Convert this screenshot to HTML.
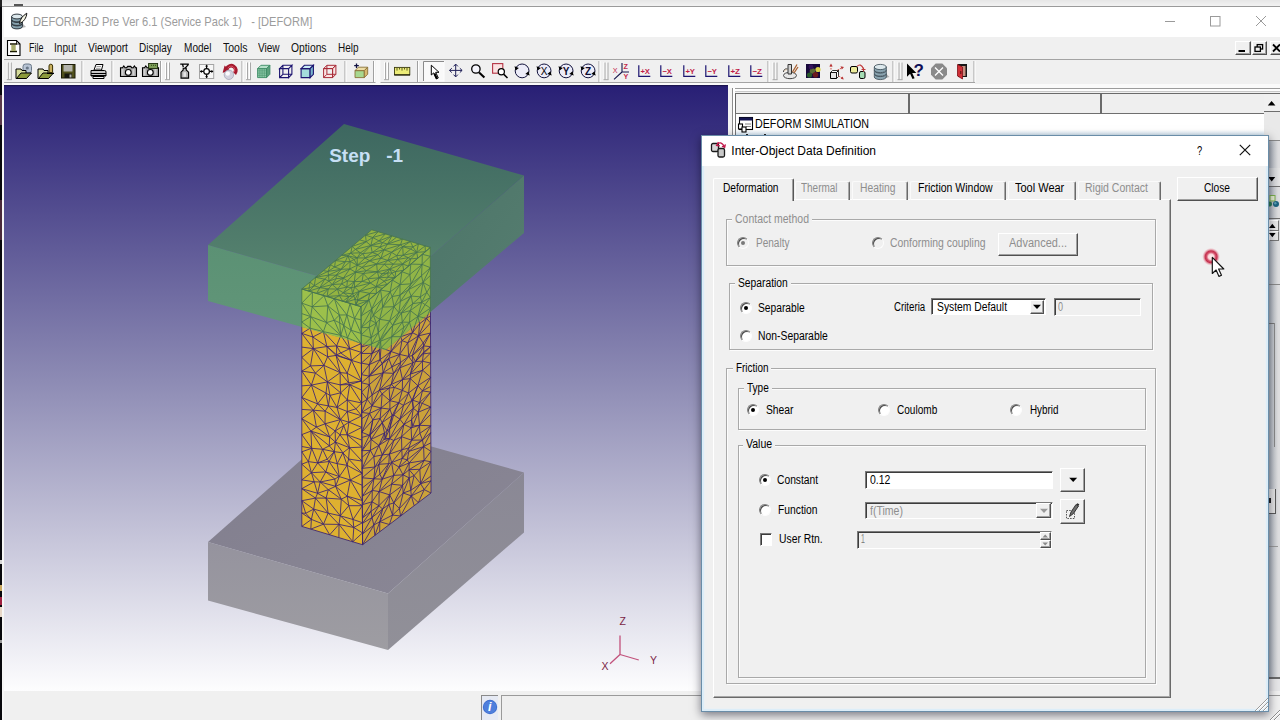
<!DOCTYPE html>
<html><head><meta charset="utf-8"><title>DEFORM-3D Pre</title>
<style>
html,body{margin:0;padding:0}
body{width:1280px;height:720px;overflow:hidden;position:relative;background:#f0f0f0;font-family:"Liberation Sans",sans-serif;}
.t{position:absolute;white-space:pre;transform-origin:0 0;display:block}
div,svg{box-sizing:border-box}
.abs{position:absolute}
.grp{position:absolute;border:1px solid #a9a9a9;box-shadow:1px 1px 0 #fcfcfc, inset 1px 1px 0 #fcfcfc}
.lbl{position:absolute;background:#f0f0f0}
.btn{position:absolute;background:#f0f0f0;border:1px solid;border-color:#fff #505050 #505050 #fff;box-shadow:inset -1px -1px 0 #a0a0a0}
.sunk{position:absolute;border:1px solid;border-color:#7a7a7a #fff #fff #7a7a7a;box-shadow:inset 1px 1px 0 #3c3c3c}
.radio{position:absolute;width:12px;height:12px;border-radius:50%;background:#fff;border:1px solid;border-color:#808080 #fcfcfc #fcfcfc #808080;box-shadow:inset 1px 1px 0 #4a4a4a}
.radio.dis{background:#f0f0f0}
.dot{position:absolute;width:4px;height:4px;border-radius:50%;background:#000}
</style></head><body>

<div style="position:absolute;left:0px;top:0px;width:1280px;height:7px;background:linear-gradient(#e6e6e6,#f4f4f4)"></div>
<div style="position:absolute;left:0px;top:6px;width:1280px;height:1px;background:#9a9a9a"></div>
<div style="position:absolute;left:14px;top:4px;width:9px;height:2px;background:#555"></div>
<div style="position:absolute;left:0px;top:7px;width:1280px;height:30px;background:#fff"></div>
<div style="position:absolute;left:0px;top:37px;width:1280px;height:23px;background:#f0f0f0"></div>
<div style="position:absolute;left:0px;top:59px;width:1280px;height:1px;background:#a3a3a3"></div>
<div style="position:absolute;left:0px;top:60px;width:1280px;height:22px;background:#f0f0f0"></div>
<div style="position:absolute;left:0px;top:82px;width:975px;height:1px;background:#a3a3a3"></div>
<div style="position:absolute;left:0px;top:83px;width:975px;height:2px;background:#fafafa"></div>
<div style="position:absolute;left:975px;top:84px;width:305px;height:4px;background:#fafafa"></div>
<span class="t" style="left:32.50px;top:13.60px;font-size:12.2px;line-height:16px;color:#9c9c9c;transform:scaleX(0.9102);">DEFORM-3D Pre Ver 6.1 (Service Pack 1)   - [DEFORM]</span>
<svg class="abs" style="left:1160px;top:10px" width="112" height="22" viewBox="1160 10 112 22" fill="none" stroke="#9a9a9a" stroke-width="1"><path d="M1165 21.5H1175"/><rect x="1210.5" y="16.5" width="9.5" height="9.5"/><path d="M1256 16L1266 26M1266 16L1256 26"/></svg>
<span class="t" style="left:28.60px;top:40.00px;font-size:12px;line-height:16px;color:#111;transform:scaleX(0.7453);">File</span>
<span class="t" style="left:54.40px;top:40.00px;font-size:12px;line-height:16px;color:#111;transform:scaleX(0.8427);">Input</span>
<span class="t" style="left:88.00px;top:40.00px;font-size:12px;line-height:16px;color:#111;transform:scaleX(0.8602);">Viewport</span>
<span class="t" style="left:139.20px;top:40.00px;font-size:12px;line-height:16px;color:#111;transform:scaleX(0.8333);">Display</span>
<span class="t" style="left:183.80px;top:40.00px;font-size:12px;line-height:16px;color:#111;transform:scaleX(0.8379);">Model</span>
<span class="t" style="left:222.50px;top:40.00px;font-size:12px;line-height:16px;color:#111;transform:scaleX(0.8744);">Tools</span>
<span class="t" style="left:258.00px;top:40.00px;font-size:12px;line-height:16px;color:#111;transform:scaleX(0.8372);">View</span>
<span class="t" style="left:290.50px;top:40.00px;font-size:12px;line-height:16px;color:#111;transform:scaleX(0.8587);">Options</span>
<span class="t" style="left:337.50px;top:40.00px;font-size:12px;line-height:16px;color:#111;transform:scaleX(0.8313);">Help</span>
<div class="btn" style="left:1235px;top:41px;width:16px;height:14px"></div>
<div class="btn" style="left:1251.5px;top:41px;width:15.5px;height:14px"></div>
<div class="btn" style="left:1269.5px;top:41px;width:16px;height:14px"></div>
<svg class="abs" style="left:1235px;top:41px" width="45" height="14" viewBox="1235 41 45 14"><rect x="1238.5" y="50" width="6.5" height="2" fill="#000"/><g fill="none" stroke="#000" stroke-width="1.3"><rect x="1257.2" y="44.6" width="5.4" height="4.4"/><rect x="1255" y="47" width="5.4" height="4.4" fill="#f0f0f0"/></g><path d="M1273 44.5L1280 51.5M1280 44.5L1273 51.5" stroke="#000" stroke-width="1.8"/></svg>
<div style="position:absolute;left:0px;top:7px;width:2.4px;height:713px;background:#08080c"></div>
<div style="position:absolute;left:0px;top:0px;width:2px;height:7px;background:#222"></div>
<div style="position:absolute;left:0px;top:95px;width:2px;height:30px;background:#5a3a4a"></div>
<div style="position:absolute;left:0px;top:200px;width:2px;height:40px;background:#4a2a3a"></div>
<div style="position:absolute;left:0px;top:560px;width:2px;height:4px;background:#d8d8d8"></div>
<div style="position:absolute;left:0px;top:585px;width:2px;height:6px;background:#caa860"></div>
<div style="position:absolute;left:0px;top:597px;width:2px;height:8px;background:#a02040"></div>
<div style="position:absolute;left:0px;top:607px;width:2px;height:10px;background:#e8d8c8"></div>
<div style="position:absolute;left:0px;top:640px;width:2px;height:3px;background:#999"></div>
<div style="position:absolute;left:2.4px;top:7px;width:1.6px;height:713px;background:#f6f6f6"></div>
<svg class="abs" style="left:0;top:60px" width="1280" height="24" viewBox="0 60 1280 24" shape-rendering="auto"><path d="M7.3 62V79.5M10.3 62V79.5" stroke="#fff"/><path d="M8.3 62.5V79.7M11.3 62.5V79.7M6.8 79.7H11.8" stroke="#a8a8a8"/><rect x="23" y="64" width="8.5" height="9" rx="2.5" fill="#b8c4d4" stroke="#6a7888" stroke-width="1"/><circle cx="27.3" cy="68" r="1.6" fill="#6a7888"/><path d="M16 69h5l1 1.5h4v8H16z" fill="#d6dc9c" stroke="#000" stroke-width="1"/><path d="M16.5 78.5l4.5-5.5h10.5l-5 5.5z" fill="#8c9a3c" stroke="#000" stroke-width="1"/><path d="M38 69h5l1 1.5h4v8H38z" fill="#d6dc9c" stroke="#000" stroke-width="1"/><path d="M38.5 78.5l4.5-5.5h10.5l-5 5.5z" fill="#8c9a3c" stroke="#000" stroke-width="1"/><path d="M49 72.5V66a1.8 1.8 0 0 1 3.6 0V72.5z" fill="#c9b060" stroke="#3a3000" stroke-width="1"/><path d="M47 73.5h7" stroke="#000"/><rect x="61.5" y="64.5" width="13.5" height="13.5" fill="#50501c" stroke="#1c1c08"/><rect x="63.5" y="65" width="9" height="6.5" fill="#b4b4ac"/><rect x="64.5" y="73.5" width="7.5" height="4.5" fill="#181810"/><rect x="69.5" y="74.5" width="2" height="3" fill="#b4b4ac"/><path d="M82 61V82" stroke="#a0a0a0"/><path d="M83 61V82" stroke="#fff"/><path d="M94 70L96 64.5h7l-1.5 5.5z" fill="#fff" stroke="#000"/><path d="M91 70.5h13.5a1.5 1.5 0 0 1 1.5 1.5v4H91z" fill="#c8c8c8" stroke="#000"/><path d="M91 73.5h15M91 75.5h15" stroke="#000"/><path d="M93 76.5h11v2H93z" fill="#eee" stroke="#000"/><path d="M96.5 66.5h4.5M96 68.3h4.5" stroke="#888" stroke-width=".8"/><path d="M112 61V82" stroke="#a0a0a0"/><path d="M113 61V82" stroke="#fff"/><path d="M120.5 67.7h2l1.3-1.8l1.3 1.8h1.6l1-1.3h3l1 1.3h1.4l1.3-1.8l1.3 1.8h.8v8.8H120.5z" fill="#a8a8a8" stroke="#000" stroke-width="1.1"/><rect x="121.5" y="69" width="2" height="6.5" fill="#d0d0d0"/><rect x="132.5" y="69" width="2" height="6.5" fill="#d0d0d0"/><circle cx="128.3" cy="72.4" r="2.9" fill="#fff" stroke="#000" stroke-width="1.1"/><path d="M142.5 67.7h2l1.3-1.8l1.3 1.8h1.6l1-1.3h3l1 1.3h1.4l1.3-1.8l1.3 1.8h.8v8.8H142.5z" fill="#a8a8a8" stroke="#000" stroke-width="1.1"/><rect x="143.5" y="69" width="2" height="6.5" fill="#d0d0d0"/><rect x="154.5" y="69" width="2" height="6.5" fill="#d0d0d0"/><circle cx="150.3" cy="72.4" r="2.9" fill="#fff" stroke="#000" stroke-width="1.1"/><rect x="148.6" y="63.5" width="9" height="5" fill="#7c9c58" stroke="#1c2c0c" stroke-width=".9"/><path d="M151 65.3h5.5" stroke="#2c4c14" stroke-width="1" stroke-dasharray="1 1"/><path d="M160.5 61V82" stroke="#a0a0a0"/><path d="M161.5 61V82" stroke="#fff"/><path d="M165.5 62V79.5M168.5 62V79.5" stroke="#fff"/><path d="M166.5 62.5V79.7M169.5 62.5V79.7M165 79.7H170" stroke="#a8a8a8"/><path d="M180.2 64.2h8.6M188.6 64.4L184.6 68.6M182.6 64.4l.7 2.8" stroke="#000" stroke-width="1.3" fill="none"/><path d="M183.2 68.2h3v1.8l2.4 2.2v5.9h-7.6v-5.9l2.2-2.2z" fill="#b4b4b4" stroke="#000" stroke-width="1.1"/><rect x="183.4" y="72.2" width="2.6" height="4.6" fill="#e6e6e6"/><rect x="199.5" y="64.5" width="14.2" height="14" fill="#f6f6f6" stroke="#a4a4a4"/><circle cx="206.6" cy="71.4" r="2.8" fill="#fff" stroke="#000" stroke-width="1.2"/><path d="M206.6 65.4v3.2M206.6 74.2v3.2M200.4 71.4h3.2M209.6 71.4h3.2" stroke="#000" stroke-width="1.2"/><path d="M205.1 66.6L206.6 64.6l1.5 2zM205.1 76.2L206.6 78.2l1.5-2zM201.8 69.9L199.8 71.4l2 1.5zM211.4 69.9l2 1.5l-2 1.5z" fill="#000"/><path d="M234.6 73.6A4.7 4.7 0 1 0 226.8 68.6" fill="none" stroke="#a41a2e" stroke-width="3.8"/><path d="M233.8 72.2A3.6 3.6 0 1 0 228 68" fill="none" stroke="#dc5064" stroke-width="1"/><path d="M222.6 72.8L224.6 65.4L230.2 71z" fill="#a41a2e"/><circle cx="228.9" cy="74.8" r="4.7" fill="#d2d2de" stroke="#9c9cb0" stroke-width=".7"/><circle cx="227.8" cy="73.6" r="2.2" fill="#fafafc"/><path d="M242 61V82" stroke="#a0a0a0"/><path d="M243 61V82" stroke="#fff"/><path d="M246.5 62V79.5M249.5 62V79.5" stroke="#fff"/><path d="M247.5 62.5V79.7M250.5 62.5V79.7M246 79.7H251" stroke="#a8a8a8"/><path d="M257.6 68.6h9v9h-9z" fill="#8ccaa8" stroke="#3c8a64" stroke-width=".9"/><path d="M257.6 68.6l3.3-3.3h9l-3.3 3.3z" fill="#b4e0c8" stroke="#3c8a64" stroke-width=".9"/><path d="M266.6 68.6l3.3-3.3v9l-3.3 3.3z" fill="#5ca07c" stroke="#3c8a64" stroke-width=".9"/><path d="M259.85 68.6v9M262.1 68.6v9M264.35 68.6v9M257.6 70.85h9M257.6 73.1h9M257.6 75.35h9" stroke="#4c946e" stroke-width=".6"/><path d="M279.6 68.6h9v9h-9zM279.6 68.6l3.3-3.3h9l-3.3 3.3zM288.6 68.6l3.3-3.3v9l-3.3 3.3zM282.90000000000003 65.3v9h9M282.90000000000003 74.3l-3.3 3.3" fill="none" stroke="#1c1470" stroke-width="1.1"/><path d="M301.1 68.6h9v9h-9z" fill="#a4dcdc" stroke="#1c1470" stroke-width="1.1"/><path d="M301.1 68.6l3.3-3.3h9l-3.3 3.3z" fill="#c8ecf4" stroke="#1c1470" stroke-width="1.1"/><path d="M310.1 68.6l3.3-3.3v9l-3.3 3.3z" fill="#78b4cc" stroke="#1c1470" stroke-width="1.1"/><path d="M323.6 68.6h9v9h-9zM323.6 68.6l3.3-3.3h9l-3.3 3.3zM332.6 68.6l3.3-3.3v9l-3.3 3.3zM326.90000000000003 65.3v9h9M326.90000000000003 74.3l-3.3 3.3" fill="#fbe4e4" stroke="#a82c38" stroke-width="1"/><path d="M345 61V82" stroke="#a0a0a0"/><path d="M346 61V82" stroke="#fff"/><path d="M354.2 65.7h4.6M356.5 63.4v4.6" stroke="#101040" stroke-width="1.3"/><path d="M355 70.6h9.3v7h-9.3z" fill="#a8d890" stroke="#8a7238" stroke-width=".9"/><path d="M355 70.6l3.4-3.4h9.3l-3.4 3.4z" fill="#ecdca4" stroke="#8a7238" stroke-width=".9"/><path d="M364.3 70.6l3.4-3.4v7l-3.4 3.4z" fill="#d8b870" stroke="#8a7238" stroke-width=".9"/><path d="M373.5 61V82" stroke="#a0a0a0"/><path d="M374.5 61V82" stroke="#fff"/><rect x="375.5" y="60" width="5" height="23" fill="#f8f8f8"/><path d="M384.5 62V79.5M387.5 62V79.5" stroke="#fff"/><path d="M385.5 62.5V79.7M388.5 62.5V79.7M384 79.7H389" stroke="#a8a8a8"/><rect x="394.5" y="67.4" width="15.3" height="7.4" fill="#ecec78" stroke="#3a3a10" stroke-width=".9"/><path d="M397 68v2.6M399.5 68v1.5M402 68v2.6M404.5 68v1.5M407 68v2.6" stroke="#3a3a10" stroke-width=".8"/><path d="M394.3 75h15.7" stroke="#1a1a00" stroke-width="1.1"/><path d="M417.5 61V82" stroke="#a0a0a0"/><path d="M418.5 61V82" stroke="#fff"/><rect x="423.5" y="61.5" width="20.5" height="19.5" fill="#f9f9f9" stroke="#fdfdfd"/><path d="M423.5 81V61.5H444" stroke="#8a8a8a" fill="none"/><polygon points="431.3,65.2 431.3,75 433.7,72.9 436.3,78.9 438.3,78 435.7,72.3 439,72.3" fill="#fff" stroke="#000" stroke-width="1" stroke-linejoin="miter"/><path d="M434.4 73.5l2.6 5.2" stroke="#000" stroke-width="2"/><path d="M455.7 64.3v12.4M449.5 70.4h12.6" stroke="#202058" stroke-width="1"/><path d="M453.5 66.4L455.7 64.1l2.2 2.3M453.5 74.6L455.7 76.9l2.2-2.3M451.8 68.2L449.5 70.4l2.3 2.2M459.8 68.2l2.3 2.2l-2.3 2.2" stroke="#202058" stroke-width="1" fill="none"/><circle cx="475.9" cy="69" r="4.2" fill="#f4f4fb" stroke="#000" stroke-width="1.3"/><path d="M479.1 72.4l5.3 5" stroke="#000" stroke-width="2.1"/><rect x="492.6" y="63.6" width="10.2" height="9.6" fill="#fbe2e2" stroke="#b43444" stroke-width="1.1"/><circle cx="501.3" cy="71.7" r="3.1" fill="#fff" stroke="#000" stroke-width="1.2"/><path d="M503.6 74.1l3.9 3.9" stroke="#000" stroke-width="1.5"/><circle cx="522.1" cy="70.9" r="6.9" fill="#ececf8" stroke="#12123c" stroke-width="1"/><path d="M514.5 66.30000000000001l1.2 4.2l3.2-2.6zM529.7 75.5l-1.2-4.2l-3.2 2.6z" fill="#000"/><circle cx="544.1" cy="70.9" r="6.9" fill="#ececf8" stroke="#12123c" stroke-width="1"/><path d="M536.5 66.30000000000001l1.2 4.2l3.2-2.6zM551.7 75.5l-1.2-4.2l-3.2 2.6z" fill="#000"/><text x="544.1" y="74.5" text-anchor="middle" font-family="Liberation Sans, sans-serif" font-size="10" fill="#000">X</text><circle cx="566.1" cy="70.9" r="6.9" fill="#ececf8" stroke="#12123c" stroke-width="1"/><path d="M558.5 66.30000000000001l1.2 4.2l3.2-2.6zM573.7 75.5l-1.2-4.2l-3.2 2.6z" fill="#000"/><text x="566.1" y="74.5" text-anchor="middle" font-family="Liberation Sans, sans-serif" font-size="10" font-weight="bold" fill="#0c0c30">Y</text><circle cx="588.1" cy="70.9" r="6.9" fill="#ececf8" stroke="#12123c" stroke-width="1"/><path d="M580.5 66.30000000000001l1.2 4.2l3.2-2.6zM595.7 75.5l-1.2-4.2l-3.2 2.6z" fill="#000"/><text x="588.1" y="74.5" text-anchor="middle" font-family="Liberation Sans, sans-serif" font-size="10" font-weight="bold" fill="#0c0c30">Z</text><path d="M599 61V82" stroke="#a0a0a0"/><path d="M600 61V82" stroke="#fff"/><path d="M604.0 62V79.5M607.0 62V79.5" stroke="#fff"/><path d="M605.0 62.5V79.7M608.0 62.5V79.7M603.5 79.7H608.5" stroke="#a8a8a8"/><path d="M622.0 63v9h7M622.0 72L614.0 79.3" stroke="#16164c" stroke-width="1.1" fill="none"/><g font-family="Liberation Sans, sans-serif" font-size="7.2" fill="#c4284c"><text x="623.5" y="68.8" font-weight="bold">Z</text><text x="623.5" y="79" font-weight="bold">Y</text><text x="612.8" y="73.4">X</text></g><path d="M638.8 65.3V76.4H650.3" stroke="#1c1470" stroke-width="1.2" fill="none"/><text x="640.4" y="73.6" font-family="Liberation Sans, sans-serif" font-size="7.6" font-weight="bold" fill="#c01c48" textLength="9.6" lengthAdjust="spacingAndGlyphs">+X</text><path d="M660.8 65.3V76.4H672.3" stroke="#1c1470" stroke-width="1.2" fill="none"/><text x="662.4" y="73.6" font-family="Liberation Sans, sans-serif" font-size="7.6" font-weight="bold" fill="#c01c48" textLength="9.6" lengthAdjust="spacingAndGlyphs">−X</text><path d="M683.8 65.3V76.4H695.3" stroke="#1c1470" stroke-width="1.2" fill="none"/><text x="685.4" y="73.6" font-family="Liberation Sans, sans-serif" font-size="7.6" font-weight="bold" fill="#c01c48" textLength="9.6" lengthAdjust="spacingAndGlyphs">+Y</text><path d="M705.8 65.3V76.4H717.3" stroke="#1c1470" stroke-width="1.2" fill="none"/><text x="707.4" y="73.6" font-family="Liberation Sans, sans-serif" font-size="7.6" font-weight="bold" fill="#c01c48" textLength="9.6" lengthAdjust="spacingAndGlyphs">−Y</text><path d="M728.8 65.3V76.4H740.3" stroke="#1c1470" stroke-width="1.2" fill="none"/><text x="730.4" y="73.6" font-family="Liberation Sans, sans-serif" font-size="7.6" font-weight="bold" fill="#c01c48" textLength="9.6" lengthAdjust="spacingAndGlyphs">+Z</text><path d="M750.8 65.3V76.4H762.3" stroke="#1c1470" stroke-width="1.2" fill="none"/><text x="752.4" y="73.6" font-family="Liberation Sans, sans-serif" font-size="7.6" font-weight="bold" fill="#c01c48" textLength="9.6" lengthAdjust="spacingAndGlyphs">−Z</text><path d="M768 61V82" stroke="#a0a0a0"/><path d="M769 61V82" stroke="#fff"/><path d="M773.0 62V79.5M776.0 62V79.5" stroke="#fff"/><path d="M774.0 62.5V79.7M777.0 62.5V79.7M772.5 79.7H777.5" stroke="#a8a8a8"/><ellipse cx="790" cy="75.5" rx="6.5" ry="3.2" fill="#e8e8e8" stroke="#444"/><path d="M788 74V64.5h3.5V74z" fill="#d0d0d0" stroke="#333"/><path d="M783.5 72c0-3 3-4 4.5-2.5" fill="#f4e0c8" stroke="#444"/><path d="M792.5 72L797 64.5M794 73L798 67" stroke="#a86030" stroke-width="1.3"/><rect x="806" y="64" width="14" height="14" fill="#18083c"/><circle cx="818" cy="69.5" r="2.6" fill="#d8d048"/><circle cx="812.5" cy="71" r="2.8" fill="#5a6a34"/><circle cx="809.5" cy="75" r="2.6" fill="#2a5c2c"/><circle cx="815.5" cy="74.8" r="2.8" fill="#6c1a1c"/><circle cx="811" cy="67" r="2.4" fill="#34125a"/><path d="M830.5 72.5h6v6h-6z" fill="#e8e8e8" stroke="#000"/><path d="M830.5 72.5l2-2h6l-2 2zM836.5 72.5l2-2v6l-2 2z" fill="#fff" stroke="#000" stroke-width=".8"/><path d="M831.0 69.5V64.5M837.5 70L843.0 67.5M838.5 76l4.5 2.5" stroke="#d05048" stroke-width="1" stroke-dasharray="1.5 1"/><path d="M829.3 66.5l1.7-3l1.7 3zM840.5 66.3l3.5 .6l-2.2 2.6zM840.7 78.8l3 .6l-1-3z" fill="#b83838"/><rect x="850.5" y="66.5" width="7" height="6.5" rx="1.5" fill="#ecec9c" stroke="#000"/><rect x="859.5" y="71.5" width="5.5" height="7" rx="1.5" fill="#a4dcb4" stroke="#000"/><path d="M857 66.5c2-2.5 5-2 6.5 2.5M861.5 69.5h4M863.5 67.5v4" stroke="#c03838" stroke-width="1.1" fill="none"/><path d="M883.5 78.5l6-1.5l-3-3z" fill="#b0b0b0"/><path d="M874.3 74v3a6 2.6 0 0 0 12 0v-3z" fill="#8aa4b0" stroke="#3a4a54" stroke-width=".8"/><ellipse cx="880.3" cy="74" rx="6" ry="2.6" fill="#dce8ec" stroke="#3a4a54" stroke-width=".8"/><path d="M874.3 70.5v3a6 2.6 0 0 0 12 0v-3z" fill="#8aa4b0" stroke="#3a4a54" stroke-width=".8"/><ellipse cx="880.3" cy="70.5" rx="6" ry="2.6" fill="#dce8ec" stroke="#3a4a54" stroke-width=".8"/><path d="M874.3 67v3a6 2.6 0 0 0 12 0v-3z" fill="#8aa4b0" stroke="#3a4a54" stroke-width=".8"/><ellipse cx="880.3" cy="67" rx="6" ry="2.6" fill="#dce8ec" stroke="#3a4a54" stroke-width=".8"/><path d="M893 61V82" stroke="#a0a0a0"/><path d="M894 61V82" stroke="#fff"/><path d="M898.0 62V79.5M901.0 62V79.5" stroke="#fff"/><path d="M899.0 62.5V79.7M902.0 62.5V79.7M897.5 79.7H902.5" stroke="#a8a8a8"/><polygon points="907.0,63.5 907.0,76.7 910.1,73.8 912.5,79.1 914.6,78.2 912.2,73.0 916.4,73.0" fill="#000" stroke="#000" stroke-width="0" stroke-linejoin="round"/><text x="913.6" y="75.6" font-family="Liberation Sans, sans-serif" font-size="17" font-weight="bold" fill="#101058">?</text><polygon points="935.7,63.5 942.3,63.5 947.0,68.2 947.0,74.8 942.3,79.5 935.7,79.5 931.0,74.8 931.0,68.2" fill="#8a8a8a"/><path d="M935 67.5l8 8M943 67.5l-8 8" stroke="#fff" stroke-width="1.3"/><rect x="958" y="64" width="9" height="13" fill="#181818"/><rect x="960" y="66" width="5.5" height="10" fill="#c89080"/><path d="M957.5 64.5l5 2.5v12l-5-3z" fill="#d03038" stroke="#801018" stroke-width=".8"/><path d="M960.8 71v3" stroke="#501010"/><path d="M974 61V82" stroke="#a0a0a0"/><path d="M975 61V82" stroke="#fff"/></svg>
<svg class="abs" style="left:4px;top:8px" width="30" height="50" viewBox="4 8 30 50"><path d="M19 28.5l7-1.5l-3-3z" fill="#b8b8b8"/><path d="M11.6 23.5v3a5.4 2.4 0 0 0 10.8 0v-3z" fill="#88a2ae" stroke="#202830" stroke-width=".9"/><ellipse cx="17" cy="23.5" rx="5.4" ry="2.4" fill="#dce8ec" stroke="#202830" stroke-width=".9"/><path d="M11.6 20v3a5.4 2.4 0 0 0 10.8 0v-3z" fill="#88a2ae" stroke="#202830" stroke-width=".9"/><ellipse cx="17" cy="20" rx="5.4" ry="2.4" fill="#dce8ec" stroke="#202830" stroke-width=".9"/><path d="M11.6 16.5v3a5.4 2.4 0 0 0 10.8 0v-3z" fill="#88a2ae" stroke="#202830" stroke-width=".9"/><ellipse cx="17" cy="16.5" rx="5.4" ry="2.4" fill="#dce8ec" stroke="#202830" stroke-width=".9"/><path d="M19.5 23.5C20 19 23 15.5 26.8 13.2C26.5 18 23.5 22 19.5 23.5z" fill="#f4f4e4" stroke="#101010" stroke-width="1"/><path d="M7.5 40.5h9l3.5 3.5v11.5h-12.5z" fill="#fff" stroke="#000" stroke-width="1.1"/><path d="M16.5 40.5v3.5h3.5" fill="none" stroke="#000" stroke-width=".8"/><path d="M10 44h7M10 51.5h7" stroke="#1a1a00" stroke-width="1.6"/><rect x="11.3" y="45" width="4.4" height="6" fill="#a8ac6c"/></svg>
<svg style="position:absolute;left:4px;top:85px" width="724" height="606" viewBox="4 85 724 606">
<defs><linearGradient id="bg" x1="0" y1="0" x2="0" y2="1"><stop offset="0" stop-color="#281f75"/><stop offset="0.487" stop-color="#8d8bb4"/><stop offset="1" stop-color="#fdfdfe"/></linearGradient>
<linearGradient id="gt" x1="0" y1="0" x2="0" y2="1"><stop offset="0" stop-color="#3d6760"/><stop offset="1" stop-color="#5a8771"/></linearGradient>
<linearGradient id="gl" x1="0" y1="0" x2="0" y2="1"><stop offset="0" stop-color="#5b9174"/><stop offset="1" stop-color="#63977a"/></linearGradient>
<linearGradient id="gr" x1="0" y1="0" x2="1" y2="1"><stop offset="0" stop-color="#4a7366"/><stop offset="1" stop-color="#587f72"/></linearGradient>
<linearGradient id="bt" x1="0" y1="0" x2="1" y2="1"><stop offset="0" stop-color="#807d8d"/><stop offset="1" stop-color="#8b8896"/></linearGradient>
<linearGradient id="bl" x1="0" y1="0" x2="0" y2="1"><stop offset="0" stop-color="#95939e"/><stop offset="1" stop-color="#9e9da2"/></linearGradient>
<linearGradient id="br" x1="0" y1="0" x2="0" y2="1"><stop offset="0" stop-color="#8a8895"/><stop offset="1" stop-color="#919098"/></linearGradient>
<clipPath id="ghex"><polygon points="344.0,124.0 524.0,175.5 524.0,233.0 385.5,350.0 208.0,301.0 208.0,245.0"/></clipPath>
</defs>
<rect x="4" y="85" width="724" height="606" fill="url(#bg)"/><rect x="4" y="85" width="724" height="1.2" fill="#1b1450"/>
<polygon points="344.0,422.0 524.0,472.5 388.0,593.5 208.0,542.0" fill="url(#bt)"/>
<polygon points="208.0,542.0 388.0,593.5 388.0,650.0 208.0,600.5" fill="url(#bl)"/>
<polygon points="388.0,593.5 524.0,472.5 524.0,532.5 388.0,650.0" fill="url(#br)"/>
<g stroke="#3a2272" stroke-width="0.85" fill="none">
<polygon points="301.8,289.0 361.0,306.7 362.6,544.7 301.8,526.4" fill="#deb130" stroke="none"/>
<polygon points="361.0,306.7 430.3,247.5 431.0,493.0 362.6,544.7" fill="#cba23a" stroke="none"/>
<path d="M301.8 289.0L312.4 292.2M301.8 289.0L301.8 303.1M312.4 292.2L324.1 295.7M312.4 292.2L301.8 303.1M312.4 292.2L312.2 306.8M324.1 295.7L334.4 298.7M324.1 295.7L312.2 306.8M324.1 295.7L327.8 305.8M334.4 298.7L350.1 303.4M334.4 298.7L327.8 305.8M334.4 298.7L339.4 315.0M334.4 298.7L346.9 314.9M350.1 303.4L361.0 306.7M350.1 303.4L346.9 314.9M350.1 303.4L354.5 318.5M361.0 306.7L361.1 319.7M361.0 306.7L354.5 318.5M301.8 303.1L312.2 306.8M301.8 303.1L301.8 313.6M301.8 303.1L310.6 316.6M312.2 306.8L327.8 305.8M312.2 306.8L310.6 316.6M312.2 306.8L326.6 322.6M327.8 305.8L339.4 315.0M327.8 305.8L326.6 322.6M327.8 305.8L334.2 320.3M339.4 315.0L346.9 314.9M339.4 315.0L339.7 322.8M339.4 315.0L343.8 325.6M339.4 315.0L334.2 320.3M346.9 314.9L351.0 330.2M346.9 314.9L343.8 325.6M346.9 314.9L354.5 318.5M361.1 319.7L361.2 333.5M361.1 319.7L354.5 318.5M301.8 313.6L310.6 316.6M301.8 313.6L301.8 322.0M310.6 316.6L326.6 322.6M310.6 316.6L301.8 322.0M310.6 316.6L310.1 328.2M310.6 316.6L323.4 331.6M326.6 322.6L323.4 331.6M326.6 322.6L340.8 335.4M326.6 322.6L334.2 320.3M339.7 322.8L340.8 335.4M339.7 322.8L343.8 325.6M339.7 322.8L334.2 320.3M351.0 330.2L361.2 333.5M351.0 330.2L347.5 337.9M351.0 330.2L361.2 343.6M351.0 330.2L343.8 325.6M351.0 330.2L354.5 318.5M361.2 333.5L361.2 343.6M361.2 333.5L354.5 318.5M301.8 322.0L310.1 328.2M301.8 322.0L301.8 333.4M310.1 328.2L323.4 331.6M310.1 328.2L301.8 333.4M310.1 328.2L312.8 337.0M323.4 331.6L340.8 335.4M323.4 331.6L312.8 337.0M323.4 331.6L326.9 346.5M323.4 331.6L336.6 345.9M340.8 335.4L347.5 337.9M340.8 335.4L336.6 345.9M340.8 335.4L349.7 348.7M340.8 335.4L343.8 325.6M340.8 335.4L334.2 320.3M347.5 337.9L361.2 343.6M347.5 337.9L349.7 348.7M347.5 337.9L343.8 325.6M361.2 343.6L349.7 348.7M361.2 343.6L361.3 352.4M301.8 333.4L312.8 337.0M301.8 333.4L301.8 347.1M301.8 333.4L313.4 348.6M312.8 337.0L326.9 346.5M312.8 337.0L313.4 348.6M326.9 346.5L336.6 345.9M326.9 346.5L313.4 348.6M326.9 346.5L327.6 356.7M326.9 346.5L336.0 355.4M326.9 346.5L336.6 354.8M336.6 345.9L349.7 348.7M336.6 345.9L340.7 353.0M336.6 345.9L336.6 354.8M349.7 348.7L361.3 352.4M349.7 348.7L351.5 360.4M349.7 348.7L340.7 353.0M361.3 352.4L351.5 360.4M361.3 352.4L361.4 363.4M301.8 347.1L313.4 348.6M301.8 347.1L301.8 357.4M313.4 348.6L327.6 356.7M313.4 348.6L301.8 357.4M313.4 348.6L310.5 365.9M313.4 348.6L323.9 365.4M327.6 356.7L336.0 355.4M327.6 356.7L323.9 365.4M327.6 356.7L340.2 372.6M336.0 355.4L351.5 360.4M336.0 355.4L340.2 372.6M336.0 355.4L347.2 373.3M336.0 355.4L336.6 354.8M351.5 360.4L361.4 363.4M351.5 360.4L347.2 373.3M351.5 360.4L361.5 381.0M351.5 360.4L340.7 353.0M351.5 360.4L336.6 354.8M361.4 363.4L361.5 381.0M301.8 357.4L310.5 365.9M301.8 357.4L301.8 371.1M310.5 365.9L323.9 365.4M310.5 365.9L301.8 371.1M310.5 365.9L315.4 373.1M323.9 365.4L340.2 372.6M323.9 365.4L315.4 373.1M323.9 365.4L327.4 381.9M340.2 372.6L347.2 373.3M340.2 372.6L327.4 381.9M340.2 372.6L340.2 384.9M340.2 372.6L348.6 382.8M347.2 373.3L361.5 381.0M347.2 373.3L348.6 382.8M361.5 381.0L348.6 382.8M361.5 381.0L361.6 390.1M361.5 381.0L349.7 384.5M301.8 371.1L315.4 373.1M301.8 371.1L301.8 385.9M301.8 371.1L311.4 385.1M315.4 373.1L327.4 381.9M315.4 373.1L311.4 385.1M327.4 381.9L340.2 384.9M327.4 381.9L311.4 385.1M327.4 381.9L326.0 393.1M327.4 381.9L340.7 392.8M327.4 381.9L330.0 395.4M340.2 384.9L348.6 382.8M340.2 384.9L340.7 392.8M340.2 384.9L349.7 384.5M348.6 382.8L349.7 384.5M361.6 390.1L361.6 403.0M361.6 390.1L349.7 384.5M301.8 385.9L311.4 385.1M301.8 385.9L301.8 397.5M311.4 385.1L326.0 393.1M311.4 385.1L301.8 397.5M311.4 385.1L317.6 403.9M326.0 393.1L317.6 403.9M326.0 393.1L328.4 405.9M326.0 393.1L330.0 395.4M340.7 392.8L347.3 399.9M340.7 392.8L337.0 407.4M340.7 392.8L349.7 384.5M340.7 392.8L330.0 395.4M347.3 399.9L361.6 403.0M347.3 399.9L337.0 407.4M347.3 399.9L347.3 411.5M347.3 399.9L356.0 408.8M347.3 399.9L349.7 384.5M361.6 403.0L361.7 415.8M361.6 403.0L356.0 408.8M361.6 403.0L349.7 384.5M301.8 397.5L317.6 403.9M301.8 397.5L301.8 409.4M301.8 397.5L313.4 410.2M317.6 403.9L328.4 405.9M317.6 403.9L313.4 410.2M317.6 403.9L325.2 411.2M328.4 405.9L337.0 407.4M328.4 405.9L325.2 411.2M328.4 405.9L340.4 419.6M328.4 405.9L330.0 395.4M337.0 407.4L347.3 411.5M337.0 407.4L340.4 419.6M337.0 407.4L330.0 395.4M347.3 411.5L361.7 415.8M347.3 411.5L340.4 419.6M347.3 411.5L348.9 422.2M347.3 411.5L356.0 408.8M361.7 415.8L348.9 422.2M361.7 415.8L361.8 427.4M361.7 415.8L356.0 408.8M301.8 409.4L313.4 410.2M301.8 409.4L301.8 418.7M313.4 410.2L325.2 411.2M313.4 410.2L301.8 418.7M313.4 410.2L316.4 427.1M313.4 410.2L325.0 423.8M325.2 411.2L340.4 419.6M325.2 411.2L325.0 423.8M340.4 419.6L348.9 422.2M340.4 419.6L325.0 423.8M340.4 419.6L343.7 425.6M340.4 419.6L335.2 431.0M348.9 422.2L361.8 427.4M348.9 422.2L347.2 434.8M348.9 422.2L343.7 425.6M361.8 427.4L347.2 434.8M361.8 427.4L361.9 440.1M301.8 418.7L316.4 427.1M301.8 418.7L301.8 434.6M301.8 418.7L310.9 431.1M316.4 427.1L325.0 423.8M316.4 427.1L310.9 431.1M316.4 427.1L329.6 436.9M325.0 423.8L329.6 436.9M325.0 423.8L335.2 431.0M339.9 434.7L347.2 434.8M339.9 434.7L335.4 442.1M339.9 434.7L349.5 447.7M339.9 434.7L343.7 425.6M339.9 434.7L335.2 431.0M347.2 434.8L361.9 440.1M347.2 434.8L349.5 447.7M347.2 434.8L361.9 447.1M347.2 434.8L343.7 425.6M361.9 440.1L361.9 447.1M301.8 434.6L310.9 431.1M301.8 434.6L301.8 446.5M301.8 434.6L311.7 448.3M310.9 431.1L329.6 436.9M310.9 431.1L311.7 448.3M310.9 431.1L322.6 449.3M310.9 431.1L329.3 445.8M329.6 436.9L335.4 442.1M329.6 436.9L335.2 431.0M329.6 436.9L329.3 445.8M335.4 442.1L349.5 447.7M335.4 442.1L334.3 451.7M335.4 442.1L342.9 452.8M335.4 442.1L335.2 431.0M335.4 442.1L329.3 445.8M349.5 447.7L361.9 447.1M349.5 447.7L348.6 459.0M349.5 447.7L362.0 461.1M349.5 447.7L342.9 452.8M361.9 447.1L362.0 461.1M301.8 446.5L311.7 448.3M301.8 446.5L301.8 451.8M311.7 448.3L322.6 449.3M311.7 448.3L301.8 451.8M311.7 448.3L317.7 462.9M311.7 448.3L308.4 461.6M322.6 449.3L334.3 451.7M322.6 449.3L317.7 462.9M322.6 449.3L327.3 459.2M322.6 449.3L329.3 445.8M334.3 451.7L329.1 461.5M334.3 451.7L337.2 463.7M334.3 451.7L342.9 452.8M334.3 451.7L327.3 459.2M334.3 451.7L329.3 445.8M348.6 459.0L362.0 461.1M348.6 459.0L347.1 465.3M348.6 459.0L362.1 473.3M348.6 459.0L342.9 452.8M362.0 461.1L362.1 473.3M301.8 451.8L301.8 464.2M301.8 451.8L308.4 461.6M317.7 462.9L329.1 461.5M317.7 462.9L311.4 472.7M317.7 462.9L325.8 471.9M317.7 462.9L327.3 459.2M317.7 462.9L308.4 461.6M329.1 461.5L337.2 463.7M329.1 461.5L325.8 471.9M329.1 461.5L339.3 476.6M329.1 461.5L327.3 459.2M337.2 463.7L347.1 465.3M337.2 463.7L339.3 476.6M337.2 463.7L342.9 452.8M347.1 465.3L362.1 473.3M347.1 465.3L339.3 476.6M347.1 465.3L350.3 480.0M347.1 465.3L342.9 452.8M362.1 473.3L350.3 480.0M362.1 473.3L362.2 485.3M301.8 464.2L311.4 472.7M301.8 464.2L301.8 479.9M301.8 464.2L308.4 461.6M311.4 472.7L325.8 471.9M311.4 472.7L301.8 479.9M311.4 472.7L314.2 481.8M311.4 472.7L320.2 482.0M311.4 472.7L308.4 461.6M325.8 471.9L339.3 476.6M325.8 471.9L320.2 482.0M325.8 471.9L334.8 479.0M339.3 476.6L350.3 480.0M339.3 476.6L335.6 486.3M339.3 476.6L334.8 479.0M350.3 480.0L362.2 485.3M350.3 480.0L335.6 486.3M350.3 480.0L347.2 496.2M350.3 480.0L362.3 500.5M362.2 485.3L362.3 500.5M301.8 479.9L314.2 481.8M301.8 479.9L301.8 488.7M314.2 481.8L301.8 488.7M314.2 481.8L317.6 493.3M314.2 481.8L320.2 482.0M328.3 489.7L335.6 486.3M328.3 489.7L317.6 493.3M328.3 489.7L326.1 498.1M328.3 489.7L341.3 499.2M328.3 489.7L320.2 482.0M335.6 486.3L347.2 496.2M335.6 486.3L341.3 499.2M335.6 486.3L320.2 482.0M335.6 486.3L334.8 479.0M347.2 496.2L362.3 500.5M347.2 496.2L341.3 499.2M347.2 496.2L348.8 505.7M347.2 496.2L362.3 505.7M362.3 500.5L362.3 505.7M301.8 488.7L317.6 493.3M301.8 488.7L301.8 500.7M301.8 488.7L315.5 498.1M317.6 493.3L326.1 498.1M317.6 493.3L320.2 482.0M317.6 493.3L315.5 498.1M326.1 498.1L341.3 499.2M326.1 498.1L328.1 513.1M326.1 498.1L340.2 515.8M326.1 498.1L315.5 498.1M341.3 499.2L348.8 505.7M341.3 499.2L340.2 515.8M348.8 505.7L362.3 505.7M348.8 505.7L340.2 515.8M348.8 505.7L353.0 519.5M362.3 505.7L353.0 519.5M362.3 505.7L362.5 522.7M301.8 500.7L313.7 509.1M301.8 500.7L301.8 513.0M301.8 500.7L305.7 513.3M301.8 500.7L315.5 498.1M313.7 509.1L328.1 513.1M313.7 509.1L311.4 519.4M313.7 509.1L323.5 524.2M313.7 509.1L305.7 513.3M313.7 509.1L315.5 498.1M328.1 513.1L340.2 515.8M328.1 513.1L323.5 524.2M328.1 513.1L339.0 524.4M328.1 513.1L315.5 498.1M340.2 515.8L353.0 519.5M340.2 515.8L339.0 524.4M340.2 515.8L353.8 527.5M353.0 519.5L362.5 522.7M353.0 519.5L353.8 527.5M362.5 522.7L353.8 527.5M362.5 522.7L362.5 532.9M301.8 513.0L311.4 519.4M301.8 513.0L301.8 526.4M301.8 513.0L305.7 513.3M311.4 519.4L323.5 524.2M311.4 519.4L301.8 526.4M311.4 519.4L310.8 529.1M311.4 519.4L305.7 513.3M323.5 524.2L339.0 524.4M323.5 524.2L310.8 529.1M323.5 524.2L329.7 534.8M339.0 524.4L353.8 527.5M339.0 524.4L329.7 534.8M339.0 524.4L338.9 537.6M339.0 524.4L352.8 541.8M353.8 527.5L362.5 532.9M353.8 527.5L352.8 541.8M362.5 532.9L352.8 541.8M362.5 532.9L362.6 544.7M301.8 526.4L310.8 529.1M310.8 529.1L329.7 534.8M329.7 534.8L338.9 537.6M338.9 537.6L352.8 541.8M352.8 541.8L362.6 544.7M320.2 482.0L334.8 479.0M340.7 353.0L336.6 354.8M343.7 425.6L335.2 431.0"/><path d="M361.0 306.7L369.0 299.9M361.0 306.7L361.1 316.0M369.0 299.9L380.5 290.0M369.0 299.9L361.1 316.0M369.0 299.9L371.7 309.1M380.5 290.0L392.3 280.0M380.5 290.0L371.7 309.1M380.5 290.0L382.0 299.3M380.5 290.0L390.2 291.8M392.3 280.0L401.9 271.7M392.3 280.0L390.2 291.8M392.3 280.0L400.0 284.6M401.9 271.7L410.8 264.1M401.9 271.7L400.0 284.6M401.9 271.7L409.8 274.6M410.8 264.1L422.3 254.3M410.8 264.1L409.8 274.6M410.8 264.1L422.1 264.4M422.3 254.3L430.3 247.5M422.3 254.3L422.1 264.4M422.3 254.3L430.3 256.3M430.3 247.5L430.3 256.3M361.1 316.0L371.7 309.1M361.1 316.0L361.1 327.7M371.7 309.1L382.0 299.3M371.7 309.1L361.1 327.7M371.7 309.1L370.3 320.1M371.7 309.1L373.3 315.1M382.0 299.3L390.2 291.8M382.0 299.3L382.7 307.1M382.0 299.3L373.3 315.1M390.2 291.8L400.0 284.6M390.2 291.8L382.7 307.1M390.2 291.8L392.1 296.6M400.0 284.6L409.8 274.6M400.0 284.6L392.1 296.6M400.0 284.6L400.0 295.1M400.0 284.6L411.1 283.8M409.8 274.6L422.1 264.4M409.8 274.6L411.1 283.8M422.1 264.4L430.3 256.3M422.1 264.4L411.1 283.8M422.1 264.4L421.5 275.7M422.1 264.4L430.4 267.7M430.3 256.3L430.4 267.7M361.1 327.7L370.3 320.1M361.1 327.7L361.2 334.8M361.1 327.7L369.1 327.4M370.3 320.1L369.1 327.4M370.3 320.1L373.3 315.1M370.3 320.1L376.3 323.1M382.7 307.1L392.1 296.6M382.7 307.1L379.6 319.3M382.7 307.1L394.0 306.7M382.7 307.1L373.3 315.1M392.1 296.6L400.0 295.1M392.1 296.6L394.0 306.7M400.0 295.1L411.1 283.8M400.0 295.1L394.0 306.7M400.0 295.1L400.4 301.4M400.0 295.1L408.6 289.6M411.1 283.8L421.5 275.7M411.1 283.8L408.6 289.6M421.5 275.7L430.4 267.7M421.5 275.7L423.0 282.4M421.5 275.7L408.6 289.6M430.4 267.7L423.0 282.4M430.4 267.7L430.4 275.5M361.2 334.8L369.1 327.4M361.2 334.8L361.3 347.1M361.2 334.8L371.1 337.7M369.1 327.4L371.1 337.7M369.1 327.4L376.3 323.1M379.6 319.3L394.0 306.7M379.6 319.3L378.3 332.7M379.6 319.3L389.7 320.9M379.6 319.3L373.3 315.1M379.6 319.3L376.3 323.1M394.0 306.7L400.4 301.4M394.0 306.7L389.7 320.9M394.0 306.7L398.9 312.7M400.4 301.4L411.1 296.0M400.4 301.4L398.9 312.7M400.4 301.4L408.6 289.6M411.1 296.0L423.0 282.4M411.1 296.0L398.9 312.7M411.1 296.0L412.7 303.7M411.1 296.0L420.4 296.9M411.1 296.0L401.4 313.0M411.1 296.0L408.6 289.6M423.0 282.4L430.4 275.5M423.0 282.4L420.4 296.9M423.0 282.4L430.4 286.5M423.0 282.4L426.8 292.4M423.0 282.4L408.6 289.6M430.4 275.5L430.4 286.5M361.3 347.1L371.1 337.7M361.3 347.1L361.3 353.5M361.3 347.1L371.5 344.0M371.1 337.7L378.3 332.7M371.1 337.7L371.5 344.0M371.1 337.7L376.3 323.1M378.3 332.7L389.7 320.9M378.3 332.7L371.5 344.0M378.3 332.7L379.9 340.1M378.3 332.7L376.3 323.1M389.7 320.9L398.9 312.7M389.7 320.9L379.9 340.1M389.7 320.9L392.6 325.4M398.9 312.7L392.6 325.4M398.9 312.7L401.4 313.0M412.7 303.7L420.4 296.9M412.7 303.7L410.3 310.6M412.7 303.7L421.7 302.3M412.7 303.7L401.4 313.0M420.4 296.9L421.7 302.3M420.4 296.9L426.8 292.4M430.4 286.5L430.4 297.5M430.4 286.5L426.8 292.4M361.3 353.5L371.5 344.0M361.3 353.5L361.4 363.1M361.3 353.5L372.1 353.4M371.5 344.0L379.9 340.1M371.5 344.0L372.1 353.4M379.9 340.1L392.6 325.4M379.9 340.1L372.1 353.4M379.9 340.1L380.6 341.2M392.6 325.4L402.3 322.1M392.6 325.4L391.8 336.7M392.6 325.4L401.4 313.0M392.6 325.4L380.6 341.2M402.3 322.1L410.3 310.6M402.3 322.1L391.8 336.7M402.3 322.1L403.8 327.3M402.3 322.1L409.5 322.3M402.3 322.1L401.4 313.0M410.3 310.6L421.7 302.3M410.3 310.6L409.5 322.3M410.3 310.6L417.9 316.4M410.3 310.6L401.4 313.0M421.7 302.3L430.4 297.5M421.7 302.3L417.9 316.4M421.7 302.3L426.8 292.4M421.7 302.3L425.1 304.6M430.4 297.5L430.5 308.1M430.4 297.5L426.8 292.4M430.4 297.5L425.1 304.6M361.4 363.1L372.1 353.4M361.4 363.1L361.5 374.6M361.4 363.1L369.4 364.6M372.1 353.4L369.4 364.6M372.1 353.4L379.2 350.1M372.1 353.4L380.6 341.2M381.0 347.7L391.8 336.7M381.0 347.7L380.1 359.6M381.0 347.7L391.0 351.5M381.0 347.7L379.2 350.1M381.0 347.7L380.6 341.2M391.8 336.7L403.8 327.3M391.8 336.7L391.0 351.5M391.8 336.7L400.8 336.7M391.8 336.7L380.6 341.2M403.8 327.3L409.5 322.3M403.8 327.3L400.8 336.7M409.5 322.3L417.9 316.4M409.5 322.3L412.5 332.7M409.5 322.3L400.8 336.7M417.9 316.4L430.5 308.1M417.9 316.4L412.5 332.7M417.9 316.4L419.6 323.7M417.9 316.4L426.5 318.4M417.9 316.4L425.1 304.6M430.5 308.1L430.5 315.8M430.5 308.1L426.5 318.4M430.5 308.1L425.1 304.6M361.5 374.6L369.4 364.6M361.5 374.6L361.5 382.8M361.5 374.6L369.1 376.2M369.4 364.6L380.1 359.6M369.4 364.6L369.1 376.2M369.4 364.6L379.2 350.1M380.1 359.6L391.0 351.5M380.1 359.6L369.1 376.2M380.1 359.6L382.1 363.7M380.1 359.6L379.2 350.1M391.0 351.5L401.9 340.6M391.0 351.5L382.1 363.7M391.0 351.5L388.8 358.4M391.0 351.5L399.6 354.4M391.0 351.5L400.8 336.7M401.9 340.6L412.5 332.7M401.9 340.6L399.6 354.4M401.9 340.6L407.8 342.8M401.9 340.6L400.8 336.7M412.5 332.7L419.6 323.7M412.5 332.7L407.8 342.8M412.5 332.7L418.6 335.8M412.5 332.7L400.8 336.7M419.6 323.7L418.6 335.8M419.6 323.7L426.5 318.4M430.5 315.8L430.5 323.0M430.5 315.8L426.5 318.4M361.5 382.8L369.1 376.2M361.5 382.8L361.6 392.1M361.5 382.8L369.3 384.6M369.1 376.2L382.1 363.7M369.1 376.2L369.3 384.6M369.1 376.2L383.1 372.8M369.1 376.2L382.2 363.8M382.1 363.7L388.8 358.4M382.1 363.7L382.2 363.8M388.8 358.4L399.6 354.4M388.8 358.4L383.1 372.8M388.8 358.4L391.9 367.0M388.8 358.4L382.2 363.8M399.6 354.4L407.8 342.8M399.6 354.4L391.9 367.0M399.6 354.4L400.5 362.5M399.6 354.4L408.7 356.4M407.8 342.8L418.6 335.8M407.8 342.8L408.7 356.4M418.6 335.8L430.5 323.0M418.6 335.8L408.7 356.4M418.6 335.8L423.2 343.0M418.6 335.8L430.5 333.0M418.6 335.8L426.5 318.4M418.6 335.8L412.3 355.6M430.5 323.0L430.5 333.0M430.5 323.0L426.5 318.4M361.6 392.1L369.3 384.6M361.6 392.1L361.6 402.9M361.6 392.1L367.2 399.3M369.3 384.6L383.1 372.8M369.3 384.6L372.1 395.0M369.3 384.6L367.2 399.3M383.1 372.8L391.9 367.0M383.1 372.8L372.1 395.0M383.1 372.8L379.5 390.1M383.1 372.8L393.6 373.4M383.1 372.8L382.2 363.8M391.9 367.0L400.5 362.5M391.9 367.0L393.6 373.4M400.5 362.5L408.7 356.4M400.5 362.5L393.6 373.4M400.5 362.5L399.9 367.8M408.7 356.4L399.9 367.8M408.7 356.4L413.0 362.6M408.7 356.4L412.3 355.6M423.2 343.0L430.5 333.0M423.2 343.0L423.7 345.9M423.2 343.0L412.3 355.6M430.5 333.0L430.6 346.7M430.5 333.0L423.7 345.9M361.6 402.9L361.7 412.5M361.6 402.9L367.2 399.3M372.1 395.0L379.5 390.1M372.1 395.0L372.0 405.8M372.1 395.0L367.2 399.3M379.5 390.1L393.6 373.4M379.5 390.1L372.0 405.8M379.5 390.1L382.1 393.9M379.5 390.1L391.3 384.4M379.5 390.1L389.1 388.1M393.6 373.4L399.9 367.8M393.6 373.4L391.3 384.4M399.9 367.8L413.0 362.6M399.9 367.8L391.3 384.4M399.9 367.8L402.5 379.5M413.0 362.6L402.5 379.5M413.0 362.6L410.4 374.1M413.0 362.6L415.5 361.5M413.0 362.6L412.3 355.6M423.8 351.9L430.6 346.7M423.8 351.9L415.5 361.5M423.8 351.9L423.7 345.9M423.8 351.9L423.4 353.9M430.6 346.7L430.6 352.9M430.6 346.7L423.7 345.9M430.6 346.7L423.4 353.9M361.7 412.5L372.0 405.8M361.7 412.5L361.8 418.7M361.7 412.5L369.6 413.4M361.7 412.5L367.2 399.3M372.0 405.8L382.1 393.9M372.0 405.8L369.6 413.4M372.0 405.8L381.1 408.0M372.0 405.8L367.2 399.3M382.1 393.9L381.1 408.0M382.1 393.9L389.9 400.7M382.1 393.9L389.1 388.1M391.3 384.4L402.5 379.5M391.3 384.4L394.4 387.4M391.3 384.4L389.1 388.1M402.5 379.5L410.4 374.1M402.5 379.5L402.3 390.4M402.5 379.5L410.3 378.6M402.5 379.5L394.4 387.4M410.4 374.1L422.4 361.2M410.4 374.1L410.3 378.6M410.4 374.1L422.6 370.2M410.4 374.1L415.5 361.5M422.4 361.2L430.6 352.9M422.4 361.2L422.6 370.2M422.4 361.2L430.6 363.1M422.4 361.2L415.5 361.5M422.4 361.2L423.4 353.9M430.6 352.9L430.6 363.1M430.6 352.9L423.4 353.9M361.8 418.7L369.6 413.4M361.8 418.7L361.8 432.3M369.6 413.4L381.1 408.0M369.6 413.4L361.8 432.3M369.6 413.4L372.8 419.9M381.1 408.0L389.9 400.7M381.1 408.0L372.8 419.9M381.1 408.0L380.1 418.5M381.1 408.0L389.9 409.2M389.9 400.7L402.3 390.4M389.9 400.7L389.9 409.2M389.9 400.7L398.8 402.7M389.9 400.7L394.4 387.4M389.9 400.7L389.1 388.1M402.3 390.4L410.3 378.6M402.3 390.4L398.8 402.7M402.3 390.4L408.6 393.0M402.3 390.4L394.4 387.4M410.3 378.6L422.6 370.2M410.3 378.6L408.6 393.0M410.3 378.6L417.9 385.7M422.6 370.2L430.6 363.1M422.6 370.2L417.9 385.7M422.6 370.2L430.7 377.3M430.6 363.1L430.7 377.3M361.8 432.3L372.8 419.9M361.8 432.3L361.9 437.4M361.8 432.3L369.5 435.3M372.8 419.9L380.1 418.5M372.8 419.9L370.3 434.9M372.8 419.9L369.5 435.3M380.1 418.5L389.9 409.2M380.1 418.5L370.3 434.9M380.1 418.5L382.2 422.6M389.9 409.2L398.8 402.7M389.9 409.2L382.2 422.6M389.9 409.2L392.2 415.5M398.8 402.7L408.6 393.0M398.8 402.7L392.2 415.5M398.8 402.7L403.5 405.4M398.8 402.7L393.7 414.9M408.6 393.0L417.9 385.7M408.6 393.0L403.5 405.4M408.6 393.0L412.0 400.4M417.9 385.7L430.7 377.3M417.9 385.7L412.7 400.2M417.9 385.7L422.4 390.9M417.9 385.7L412.0 400.4M430.7 377.3L422.4 390.9M430.7 377.3L430.7 386.4M361.9 437.4L362.0 450.7M361.9 437.4L369.5 435.3M370.3 434.9L382.2 422.6M370.3 434.9L371.1 439.4M370.3 434.9L369.5 435.3M382.2 422.6L392.2 415.5M382.2 422.6L371.1 439.4M382.2 422.6L384.5 432.9M382.2 422.6L387.0 430.9M392.2 415.5L389.6 429.0M392.2 415.5L393.7 414.9M392.2 415.5L387.0 430.9M403.5 405.4L399.9 419.2M403.5 405.4L393.7 414.9M403.5 405.4L412.0 400.4M412.7 400.2L422.4 390.9M412.7 400.2L413.3 408.3M412.7 400.2L419.6 402.5M412.7 400.2L412.0 400.4M422.4 390.9L430.7 386.4M422.4 390.9L419.6 402.5M422.4 390.9L430.7 392.1M430.7 386.4L430.7 392.1M362.0 450.7L371.1 439.4M362.0 450.7L362.0 457.3M362.0 450.7L370.4 450.4M362.0 450.7L369.5 435.3M371.1 439.4L384.5 432.9M371.1 439.4L370.4 450.4M371.1 439.4L378.9 445.4M371.1 439.4L369.5 435.3M384.5 432.9L378.9 445.4M384.5 432.9L385.4 438.3M384.5 432.9L383.8 439.5M384.5 432.9L387.0 430.9M389.6 429.0L399.9 419.2M389.6 429.0L389.7 438.6M389.6 429.0L393.7 414.9M389.6 429.0L385.4 438.3M389.6 429.0L387.0 430.9M399.9 419.2L413.3 408.3M399.9 419.2L389.7 438.6M399.9 419.2L403.9 424.4M399.9 419.2L393.7 414.9M399.9 419.2L412.0 400.4M413.3 408.3L419.6 402.5M413.3 408.3L403.9 424.4M413.3 408.3L411.6 419.8M413.3 408.3L418.3 412.2M413.3 408.3L412.0 400.4M419.6 402.5L430.7 392.1M419.6 402.5L418.3 412.2M419.6 402.5L422.2 403.3M430.7 392.1L430.8 407.0M430.7 392.1L422.2 403.3M362.0 457.3L370.4 450.4M362.0 457.3L362.1 468.4M370.4 450.4L378.9 445.4M370.4 450.4L362.1 468.4M370.4 450.4L373.8 456.6M378.9 445.4L389.7 438.6M378.9 445.4L373.8 456.6M378.9 445.4L382.3 454.9M378.9 445.4L383.8 439.5M389.7 438.6L403.9 424.4M389.7 438.6L382.3 454.9M389.7 438.6L393.8 440.5M389.7 438.6L385.4 438.3M389.7 438.6L383.8 439.5M403.9 424.4L411.6 419.8M403.9 424.4L393.8 440.5M403.9 424.4L401.5 436.7M403.9 424.4L411.1 427.9M411.6 419.8L418.3 412.2M411.6 419.8L412.8 426.0M411.6 419.8L411.1 427.9M418.3 412.2L430.8 407.0M418.3 412.2L412.8 426.0M418.3 412.2L419.5 425.3M418.3 412.2L422.2 403.3M430.8 407.0L419.5 425.3M430.8 407.0L430.8 414.2M430.8 407.0L422.2 403.3M362.1 468.4L373.8 456.6M362.1 468.4L362.2 477.8M362.1 468.4L374.9 467.0M373.8 456.6L382.3 454.9M373.8 456.6L374.9 467.0M382.3 454.9L393.8 440.5M382.3 454.9L374.9 467.0M382.3 454.9L378.9 464.3M382.3 454.9L389.4 454.1M393.8 440.5L401.5 436.7M393.8 440.5L389.4 454.1M401.5 436.7L389.4 454.1M401.5 436.7L401.8 449.8M401.5 436.7L411.7 440.2M401.5 436.7L411.1 427.9M412.8 426.0L419.5 425.3M412.8 426.0L411.1 427.9M419.5 425.3L430.8 414.2M419.5 425.3L411.7 440.2M419.5 425.3L419.9 433.3M419.5 425.3L430.8 425.8M419.5 425.3L411.1 427.9M430.8 414.2L430.8 425.8M362.2 477.8L374.9 467.0M362.2 477.8L362.2 488.1M362.2 477.8L373.9 478.8M374.9 467.0L378.9 464.3M374.9 467.0L373.9 478.8M378.9 464.3L389.4 454.1M378.9 464.3L373.9 478.8M378.9 464.3L379.9 474.3M378.9 464.3L388.8 463.6M389.4 454.1L401.8 449.8M389.4 454.1L391.6 462.6M389.4 454.1L388.8 463.6M401.8 449.8L411.7 440.2M401.8 449.8L391.6 462.6M401.8 449.8L402.2 458.4M401.8 449.8L408.7 448.0M411.7 440.2L419.9 433.3M411.7 440.2L422.5 440.0M411.7 440.2L411.1 427.9M411.7 440.2L408.7 448.0M419.9 433.3L430.8 425.8M419.9 433.3L422.5 440.0M430.8 425.8L422.5 440.0M430.8 425.8L430.8 432.6M362.2 488.1L373.9 478.8M362.2 488.1L362.3 496.3M373.9 478.8L379.9 474.3M373.9 478.8L362.3 496.3M373.9 478.8L372.3 490.4M373.9 478.8L382.2 479.2M379.9 474.3L382.2 479.2M379.9 474.3L388.8 463.6M391.6 462.6L402.2 458.4M391.6 462.6L382.2 479.2M391.6 462.6L393.7 475.4M391.6 462.6L399.0 467.1M391.6 462.6L388.8 463.6M402.2 458.4L408.9 451.4M402.2 458.4L399.0 467.1M402.2 458.4L407.2 459.9M402.2 458.4L408.7 448.0M408.9 451.4L422.5 440.0M408.9 451.4L423.6 446.6M408.9 451.4L407.2 459.9M408.9 451.4L408.7 448.0M422.5 440.0L430.8 432.6M422.5 440.0L423.6 446.6M422.5 440.0L408.7 448.0M430.8 432.6L423.6 446.6M430.8 432.6L430.9 442.8M362.3 496.3L372.3 490.4M362.3 496.3L362.3 504.7M372.3 490.4L382.2 479.2M372.3 490.4L362.3 504.7M372.3 490.4L372.0 501.8M372.3 490.4L379.2 491.6M382.2 479.2L393.7 475.4M382.2 479.2L379.2 491.6M382.2 479.2L388.8 463.6M393.7 475.4L399.0 467.1M393.7 475.4L379.2 491.6M393.7 475.4L391.6 484.2M393.7 475.4L403.0 474.8M399.0 467.1L409.2 462.9M399.0 467.1L403.0 474.8M399.0 467.1L407.2 459.9M409.2 462.9L423.6 446.6M409.2 462.9L403.0 474.8M409.2 462.9L409.1 469.7M409.2 462.9L424.1 460.5M409.2 462.9L407.2 459.9M423.6 446.6L430.9 442.8M423.6 446.6L424.1 460.5M423.6 446.6L430.9 451.3M423.6 446.6L407.2 459.9M430.9 442.8L430.9 451.3M362.3 504.7L372.0 501.8M362.3 504.7L362.4 518.0M372.0 501.8L379.2 491.6M372.0 501.8L362.4 518.0M372.0 501.8L371.0 511.3M372.0 501.8L378.9 505.7M379.2 491.6L391.6 484.2M379.2 491.6L378.9 505.7M379.2 491.6L389.7 494.9M391.6 484.2L403.0 474.8M391.6 484.2L389.7 494.9M391.6 484.2L402.6 485.4M403.0 474.8L409.1 469.7M403.0 474.8L402.6 485.4M403.0 474.8L409.2 477.9M409.1 469.7L424.1 460.5M409.1 469.7L409.2 477.9M409.1 469.7L419.8 469.3M409.1 469.7L414.1 475.5M424.1 460.5L430.9 451.3M424.1 460.5L419.8 469.3M424.1 460.5L430.9 461.8M430.9 451.3L430.9 461.8M362.4 518.0L371.0 511.3M362.4 518.0L362.5 523.4M371.0 511.3L378.9 505.7M371.0 511.3L362.5 523.4M371.0 511.3L372.0 517.5M378.9 505.7L389.7 494.9M378.9 505.7L372.0 517.5M378.9 505.7L382.6 509.0M389.7 494.9L402.6 485.4M389.7 494.9L382.6 509.0M389.7 494.9L388.9 504.4M389.7 494.9L393.8 502.9M402.6 485.4L409.2 477.9M402.6 485.4L403.2 493.0M402.6 485.4L393.8 502.9M409.2 477.9L403.2 493.0M409.2 477.9L410.8 490.3M409.2 477.9L414.1 475.5M419.8 469.3L430.9 461.8M419.8 469.3L420.6 483.7M419.8 469.3L414.1 475.5M430.9 461.8L420.6 483.7M430.9 461.8L431.0 476.0M362.5 523.4L372.0 517.5M362.5 523.4L362.5 534.0M372.0 517.5L382.6 509.0M372.0 517.5L362.5 534.0M372.0 517.5L373.8 525.1M382.6 509.0L388.9 504.4M382.6 509.0L373.8 525.1M382.6 509.0L379.8 521.7M388.9 504.4L379.8 521.7M388.9 504.4L392.5 515.1M388.9 504.4L393.8 502.9M403.2 493.0L410.8 490.3M403.2 493.0L399.4 508.5M403.2 493.0L411.3 495.9M403.2 493.0L393.8 502.9M410.8 490.3L420.6 483.7M410.8 490.3L411.3 495.9M410.8 490.3L414.1 475.5M420.6 483.7L431.0 476.0M420.6 483.7L411.3 495.9M420.6 483.7L424.2 489.6M420.6 483.7L431.0 480.8M420.6 483.7L414.1 475.5M431.0 476.0L431.0 480.8M362.5 534.0L373.8 525.1M362.5 534.0L362.6 544.7M373.8 525.1L379.8 521.7M373.8 525.1L362.6 544.7M373.8 525.1L374.9 535.4M379.8 521.7L392.5 515.1M379.8 521.7L374.9 535.4M379.8 521.7L379.7 531.8M379.8 521.7L389.4 524.5M392.5 515.1L399.4 508.5M392.5 515.1L389.4 524.5M392.5 515.1L400.6 516.0M392.5 515.1L393.8 502.9M399.4 508.5L411.3 495.9M399.4 508.5L400.6 516.0M399.4 508.5L393.8 502.9M411.3 495.9L424.2 489.6M411.3 495.9L400.6 516.0M411.3 495.9L414.2 505.7M411.3 495.9L418.3 502.6M424.2 489.6L431.0 480.8M424.2 489.6L418.3 502.6M424.2 489.6L431.0 493.0M431.0 480.8L431.0 493.0M362.6 544.7L374.9 535.4M374.9 535.4L379.7 531.8M379.7 531.8L389.4 524.5M389.4 524.5L400.6 516.0M400.6 516.0L414.2 505.7M414.2 505.7L418.3 502.6M418.3 502.6L431.0 493.0M415.5 361.5L423.7 345.9M415.5 361.5L423.4 353.9M415.5 361.5L412.3 355.6M423.7 345.9L412.3 355.6M394.4 387.4L389.1 388.1M373.3 315.1L376.3 323.1M379.2 350.1L380.6 341.2M385.4 438.3L383.8 439.5M385.4 438.3L387.0 430.9"/>
</g>
<polygon points="344.0,124.0 524.0,175.5 385.5,295.5 208.0,245.0" fill="url(#gt)"/>
<polygon points="208.0,245.0 385.5,295.5 385.5,350.0 208.0,301.0" fill="url(#gl)"/>
<polygon points="385.5,295.5 524.0,175.5 524.0,233.0 385.5,350.0" fill="url(#gr)"/>
<g clip-path="url(#ghex)" stroke="#467452" stroke-width="0.85" fill="none">
<polygon points="371.7,229.8 430.3,247.5 361.0,306.7 301.8,289.0" fill="#93b341" stroke="none"/>
<polygon points="301.8,289.0 361.0,306.7 362.6,544.7 301.8,526.4" fill="#9cc04b" stroke="none"/>
<polygon points="361.0,306.7 430.3,247.5 431.0,493.0 362.6,544.7" fill="#91b547" stroke="none"/>
<path d="M301.8 289.0L308.9 291.1M301.8 289.0L310.1 282.0M301.8 289.0L309.1 288.0M308.9 291.1L316.6 293.4M308.9 291.1L314.3 285.8M308.9 291.1L319.9 287.7M308.9 291.1L309.1 288.0M316.6 293.4L322.7 295.2M316.6 293.4L319.9 287.7M316.6 293.4L328.3 288.9M322.7 295.2L327.0 296.5M322.7 295.2L328.3 288.9M327.0 296.5L333.8 298.6M327.0 296.5L328.3 288.9M327.0 296.5L337.5 289.1M327.0 296.5L339.4 295.6M333.8 298.6L342.8 301.3M333.8 298.6L339.4 295.6M342.8 301.3L345.8 302.1M342.8 301.3L349.0 296.6M342.8 301.3L339.4 295.6M345.8 302.1L355.8 305.1M345.8 302.1L349.0 296.6M345.8 302.1L353.9 296.0M345.8 302.1L355.0 299.4M355.8 305.1L361.0 306.7M355.8 305.1L357.4 300.0M355.8 305.1L368.0 300.7M355.8 305.1L358.0 300.6M355.8 305.1L355.0 299.4M361.0 306.7L368.0 300.7M310.1 282.0L314.3 285.8M310.1 282.0L315.6 277.3M310.1 282.0L309.1 288.0M314.3 285.8L319.9 287.7M314.3 285.8L315.6 277.3M314.3 285.8L324.7 279.2M314.3 285.8L309.1 288.0M319.9 287.7L328.3 288.9M319.9 287.7L324.7 279.2M319.9 287.7L329.0 281.1M319.9 287.7L332.2 284.6M328.3 288.9L337.5 289.1M328.3 288.9L332.2 284.6M337.5 289.1L343.4 292.8M337.5 289.1L332.2 284.6M337.5 289.1L341.6 283.9M337.5 289.1L346.8 287.1M337.5 289.1L339.4 295.6M343.4 292.8L349.0 296.6M343.4 292.8L346.8 287.1M343.4 292.8L352.6 293.9M343.4 292.8L351.5 287.6M343.4 292.8L339.4 295.6M349.0 296.6L353.9 296.0M349.0 296.6L352.6 293.9M349.0 296.6L339.4 295.6M353.9 296.0L359.2 291.4M353.9 296.0L352.6 293.9M353.9 296.0L355.0 299.4M357.4 300.0L359.2 291.4M357.4 300.0L369.9 293.3M357.4 300.0L358.0 300.6M357.4 300.0L355.0 299.4M368.0 300.7L369.9 293.3M368.0 300.7L376.4 293.5M368.0 300.7L358.0 300.6M315.6 277.3L324.7 279.2M315.6 277.3L323.4 270.7M315.6 277.3L328.5 275.1M315.6 277.3L328.1 271.4M324.7 279.2L329.0 281.1M324.7 279.2L328.5 275.1M329.0 281.1L332.2 284.6M329.0 281.1L328.5 275.1M329.0 281.1L336.1 275.2M329.0 281.1L336.3 278.6M332.2 284.6L341.6 283.9M332.2 284.6L343.4 278.1M332.2 284.6L336.3 278.6M341.6 283.9L346.8 287.1M341.6 283.9L343.4 278.1M341.6 283.9L347.4 280.9M346.8 287.1L347.4 280.9M346.8 287.1L354.3 281.6M346.8 287.1L351.5 287.6M354.6 287.1L359.2 291.4M354.6 287.1L354.3 281.6M354.6 287.1L362.1 281.4M354.6 287.1L370.3 283.0M354.6 287.1L352.6 293.9M354.6 287.1L351.5 287.6M359.2 291.4L369.9 293.3M359.2 291.4L370.3 283.0M359.2 291.4L376.1 286.7M359.2 291.4L352.6 293.9M359.2 291.4L355.0 299.4M369.9 293.3L376.4 293.5M369.9 293.3L376.1 286.7M369.9 293.3L358.0 300.6M376.4 293.5L376.1 286.7M376.4 293.5L382.4 288.4M323.4 270.7L330.5 264.7M323.4 270.7L328.1 271.4M328.5 275.1L336.1 275.2M328.5 275.1L341.3 269.3M328.5 275.1L328.1 271.4M336.1 275.2L343.4 278.1M336.1 275.2L341.3 269.3M336.1 275.2L349.8 268.9M336.1 275.2L336.3 278.6M343.4 278.1L347.4 280.9M343.4 278.1L349.8 268.9M343.4 278.1L355.5 272.2M343.4 278.1L336.3 278.6M347.4 280.9L354.3 281.6M347.4 280.9L355.5 272.2M354.3 281.6L362.1 281.4M354.3 281.6L355.5 272.2M354.3 281.6L363.3 273.5M354.3 281.6L351.5 287.6M362.1 281.4L370.3 283.0M362.1 281.4L363.3 273.5M362.1 281.4L368.1 278.7M370.3 283.0L376.1 286.7M370.3 283.0L368.1 278.7M370.3 283.0L379.0 277.8M376.1 286.7L382.4 288.4M376.1 286.7L379.0 277.8M376.1 286.7L384.2 281.3M376.1 286.7L387.1 284.4M382.4 288.4L387.1 284.4M330.5 264.7L334.6 267.1M330.5 264.7L335.4 260.6M330.5 264.7L328.1 271.4M334.6 267.1L341.3 269.3M334.6 267.1L335.4 260.6M334.6 267.1L345.3 261.7M334.6 267.1L328.1 271.4M341.3 269.3L349.8 268.9M341.3 269.3L345.3 261.7M341.3 269.3L350.2 261.5M341.3 269.3L328.1 271.4M349.8 268.9L355.5 272.2M349.8 268.9L350.2 261.5M349.8 268.9L357.3 265.2M355.5 272.2L363.3 273.5M355.5 272.2L357.3 265.2M355.5 272.2L362.0 267.4M355.5 272.2L366.3 270.7M363.3 273.5L368.1 278.7M363.3 273.5L366.3 270.7M363.3 273.5L377.4 271.8M368.1 278.7L379.0 277.8M368.1 278.7L377.4 271.8M379.0 277.8L384.2 281.3M379.0 277.8L377.4 271.8M379.0 277.8L382.0 273.9M379.0 277.8L388.1 277.2M379.0 277.8L387.8 272.9M384.2 281.3L387.1 284.4M384.2 281.3L388.1 277.2M384.2 281.3L395.1 277.6M387.1 284.4L395.1 277.6M335.4 260.6L345.3 261.7M335.4 260.6L341.6 255.3M335.4 260.6L347.8 255.8M345.3 261.7L350.2 261.5M345.3 261.7L347.8 255.8M350.2 261.5L357.3 265.2M350.2 261.5L354.1 259.5M350.2 261.5L347.8 255.8M357.3 265.2L362.0 267.4M357.3 265.2L357.2 257.9M357.3 265.2L365.1 258.0M357.3 265.2L369.6 260.8M357.3 265.2L354.1 259.5M362.0 267.4L366.3 270.7M362.0 267.4L369.6 260.8M362.0 267.4L376.6 264.1M366.3 270.7L377.4 271.8M366.3 270.7L376.6 264.1M377.4 271.8L382.0 273.9M377.4 271.8L376.6 264.1M377.4 271.8L384.2 264.3M377.4 271.8L389.7 269.1M382.0 273.9L389.7 269.1M382.0 273.9L387.8 272.9M388.1 277.2L395.1 277.6M388.1 277.2L387.8 272.9M388.1 277.2L392.0 273.1M395.1 277.6L395.7 271.6M395.1 277.6L403.7 270.2M395.1 277.6L392.0 273.1M341.6 255.3L350.8 253.2M341.6 255.3L352.1 246.4M341.6 255.3L347.8 255.8M350.8 253.2L357.2 257.9M350.8 253.2L352.1 246.4M350.8 253.2L355.4 249.4M350.8 253.2L347.8 255.8M350.8 253.2L360.4 252.8M357.2 257.9L365.1 258.0M357.2 257.9L362.9 253.7M357.2 257.9L354.1 259.5M357.2 257.9L347.8 255.8M357.2 257.9L360.4 252.8M365.1 258.0L369.6 260.8M365.1 258.0L362.9 253.7M365.1 258.0L372.2 252.5M365.1 258.0L377.9 254.6M369.6 260.8L376.6 264.1M369.6 260.8L377.9 254.6M369.6 260.8L380.9 258.2M376.6 264.1L384.2 264.3M376.6 264.1L380.9 258.2M376.6 264.1L387.9 260.4M384.2 264.3L389.7 269.1M384.2 264.3L387.9 260.4M384.2 264.3L393.3 264.2M389.7 269.1L395.7 271.6M389.7 269.1L402.6 264.0M389.7 269.1L387.8 272.9M389.7 269.1L392.0 273.1M389.7 269.1L393.3 264.2M395.7 271.6L403.7 270.2M395.7 271.6L402.6 264.0M395.7 271.6L392.0 273.1M403.7 270.2L402.6 264.0M403.7 270.2L408.5 266.1M352.1 246.4L355.4 249.4M352.1 246.4L359.7 239.9M352.1 246.4L366.2 241.7M355.4 249.4L366.2 241.7M355.4 249.4L370.9 245.5M355.4 249.4L360.4 252.8M362.9 253.7L372.2 252.5M362.9 253.7L370.9 245.5M362.9 253.7L360.4 252.8M372.2 252.5L377.9 254.6M372.2 252.5L370.9 245.5M372.2 252.5L380.0 247.1M372.2 252.5L383.8 249.9M377.9 254.6L380.9 258.2M377.9 254.6L383.8 249.9M380.9 258.2L387.9 260.4M380.9 258.2L383.8 249.9M380.9 258.2L391.5 252.3M387.9 260.4L397.8 259.4M387.9 260.4L391.5 252.3M387.9 260.4L396.7 255.6M387.9 260.4L393.3 264.2M397.8 259.4L402.6 264.0M397.8 259.4L396.7 255.6M397.8 259.4L403.2 255.2M397.8 259.4L408.2 257.7M397.8 259.4L393.3 264.2M402.6 264.0L408.5 266.1M402.6 264.0L410.7 258.9M402.6 264.0L408.2 257.7M402.6 264.0L393.3 264.2M408.5 266.1L410.7 258.9M408.5 266.1L417.8 258.2M359.7 239.9L366.2 241.7M359.7 239.9L365.5 235.1M366.2 241.7L370.9 245.5M366.2 241.7L365.5 235.1M366.2 241.7L372.7 237.5M370.9 245.5L380.0 247.1M370.9 245.5L372.7 237.5M370.9 245.5L379.0 240.9M370.9 245.5L382.5 242.6M370.9 245.5L360.4 252.8M380.0 247.1L383.8 249.9M380.0 247.1L382.5 242.6M380.0 247.1L387.6 244.1M383.8 249.9L391.5 252.3M383.8 249.9L387.6 244.1M383.8 249.9L400.5 244.8M391.5 252.3L396.7 255.6M391.5 252.3L400.5 244.8M391.5 252.3L402.7 246.6M396.7 255.6L403.2 255.2M396.7 255.6L402.7 246.6M403.2 255.2L402.7 246.6M403.2 255.2L410.7 249.1M403.2 255.2L416.7 252.4M403.2 255.2L408.2 257.7M410.7 258.9L417.8 258.2M410.7 258.9L416.7 252.4M410.7 258.9L408.2 257.7M417.8 258.2L416.7 252.4M417.8 258.2L425.4 251.7M365.5 235.1L372.7 237.5M365.5 235.1L371.7 229.8M365.5 235.1L378.1 231.7M372.7 237.5L379.0 240.9M372.7 237.5L378.1 231.7M372.7 237.5L385.3 233.9M379.0 240.9L382.5 242.6M379.0 240.9L385.3 233.9M379.0 240.9L391.8 235.9M382.5 242.6L387.6 244.1M382.5 242.6L391.8 235.9M387.6 244.1L400.5 244.8M387.6 244.1L391.8 235.9M387.6 244.1L396.4 237.3M387.6 244.1L402.4 239.1M400.5 244.8L402.7 246.6M400.5 244.8L402.4 239.1M400.5 244.8L410.4 241.5M402.7 246.6L410.7 249.1M402.7 246.6L410.4 241.5M402.7 246.6L412.9 246.9M410.7 249.1L416.7 252.4M410.7 249.1L412.9 246.9M416.7 252.4L425.4 251.7M416.7 252.4L418.4 243.9M416.7 252.4L425.1 245.9M416.7 252.4L408.2 257.7M416.7 252.4L412.9 246.9M425.4 251.7L425.1 245.9M425.4 251.7L430.3 247.5M371.7 229.8L378.1 231.7M378.1 231.7L385.3 233.9M385.3 233.9L391.8 235.9M391.8 235.9L396.4 237.3M396.4 237.3L402.4 239.1M402.4 239.1L410.4 241.5M410.4 241.5L418.4 243.9M410.4 241.5L412.9 246.9M418.4 243.9L425.1 245.9M418.4 243.9L412.9 246.9M425.1 245.9L430.3 247.5M352.6 293.9L351.5 287.6M387.8 272.9L392.0 273.1M354.1 259.5L347.8 255.8"/><path d="M301.8 289.0L312.4 292.2M301.8 289.0L301.8 303.1M312.4 292.2L324.1 295.7M312.4 292.2L301.8 303.1M312.4 292.2L312.2 306.8M324.1 295.7L334.4 298.7M324.1 295.7L312.2 306.8M324.1 295.7L327.8 305.8M334.4 298.7L350.1 303.4M334.4 298.7L327.8 305.8M334.4 298.7L339.4 315.0M334.4 298.7L346.9 314.9M350.1 303.4L361.0 306.7M350.1 303.4L346.9 314.9M350.1 303.4L354.5 318.5M361.0 306.7L361.1 319.7M361.0 306.7L354.5 318.5M301.8 303.1L312.2 306.8M301.8 303.1L301.8 313.6M301.8 303.1L310.6 316.6M312.2 306.8L327.8 305.8M312.2 306.8L310.6 316.6M312.2 306.8L326.6 322.6M327.8 305.8L339.4 315.0M327.8 305.8L326.6 322.6M327.8 305.8L334.2 320.3M339.4 315.0L346.9 314.9M339.4 315.0L339.7 322.8M339.4 315.0L343.8 325.6M339.4 315.0L334.2 320.3M346.9 314.9L351.0 330.2M346.9 314.9L343.8 325.6M346.9 314.9L354.5 318.5M361.1 319.7L361.2 333.5M361.1 319.7L354.5 318.5M301.8 313.6L310.6 316.6M301.8 313.6L301.8 322.0M310.6 316.6L326.6 322.6M310.6 316.6L301.8 322.0M310.6 316.6L310.1 328.2M310.6 316.6L323.4 331.6M326.6 322.6L323.4 331.6M326.6 322.6L340.8 335.4M326.6 322.6L334.2 320.3M339.7 322.8L340.8 335.4M339.7 322.8L343.8 325.6M339.7 322.8L334.2 320.3M351.0 330.2L361.2 333.5M351.0 330.2L347.5 337.9M351.0 330.2L361.2 343.6M351.0 330.2L343.8 325.6M351.0 330.2L354.5 318.5M361.2 333.5L361.2 343.6M361.2 333.5L354.5 318.5M301.8 322.0L310.1 328.2M301.8 322.0L301.8 333.4M310.1 328.2L323.4 331.6M310.1 328.2L301.8 333.4M310.1 328.2L312.8 337.0M323.4 331.6L340.8 335.4M323.4 331.6L312.8 337.0M323.4 331.6L326.9 346.5M323.4 331.6L336.6 345.9M340.8 335.4L347.5 337.9M340.8 335.4L336.6 345.9M340.8 335.4L349.7 348.7M340.8 335.4L343.8 325.6M340.8 335.4L334.2 320.3M347.5 337.9L361.2 343.6M347.5 337.9L349.7 348.7M347.5 337.9L343.8 325.6M361.2 343.6L349.7 348.7M361.2 343.6L361.3 352.4M301.8 333.4L312.8 337.0M301.8 333.4L301.8 347.1M301.8 333.4L313.4 348.6M312.8 337.0L326.9 346.5M312.8 337.0L313.4 348.6M326.9 346.5L336.6 345.9M326.9 346.5L313.4 348.6M326.9 346.5L327.6 356.7M326.9 346.5L336.0 355.4M326.9 346.5L336.6 354.8M336.6 345.9L349.7 348.7M336.6 345.9L340.7 353.0M336.6 345.9L336.6 354.8M349.7 348.7L361.3 352.4M349.7 348.7L351.5 360.4M349.7 348.7L340.7 353.0M361.3 352.4L351.5 360.4M361.3 352.4L361.4 363.4M301.8 347.1L313.4 348.6M301.8 347.1L301.8 357.4M313.4 348.6L327.6 356.7M313.4 348.6L301.8 357.4M313.4 348.6L310.5 365.9M313.4 348.6L323.9 365.4M327.6 356.7L336.0 355.4M327.6 356.7L323.9 365.4M327.6 356.7L340.2 372.6M336.0 355.4L351.5 360.4M336.0 355.4L340.2 372.6M336.0 355.4L347.2 373.3M336.0 355.4L336.6 354.8M351.5 360.4L361.4 363.4M351.5 360.4L347.2 373.3M351.5 360.4L361.5 381.0M351.5 360.4L340.7 353.0M351.5 360.4L336.6 354.8M361.4 363.4L361.5 381.0M301.8 357.4L310.5 365.9M301.8 357.4L301.8 371.1M310.5 365.9L323.9 365.4M310.5 365.9L301.8 371.1M310.5 365.9L315.4 373.1M323.9 365.4L340.2 372.6M323.9 365.4L315.4 373.1M323.9 365.4L327.4 381.9M340.2 372.6L347.2 373.3M340.2 372.6L327.4 381.9M340.2 372.6L340.2 384.9M340.2 372.6L348.6 382.8M347.2 373.3L361.5 381.0M347.2 373.3L348.6 382.8M361.5 381.0L348.6 382.8M361.5 381.0L361.6 390.1M361.5 381.0L349.7 384.5M301.8 371.1L315.4 373.1M301.8 371.1L301.8 385.9M301.8 371.1L311.4 385.1M315.4 373.1L327.4 381.9M315.4 373.1L311.4 385.1M327.4 381.9L340.2 384.9M327.4 381.9L311.4 385.1M327.4 381.9L326.0 393.1M327.4 381.9L340.7 392.8M327.4 381.9L330.0 395.4M340.2 384.9L348.6 382.8M340.2 384.9L340.7 392.8M340.2 384.9L349.7 384.5M348.6 382.8L349.7 384.5M361.6 390.1L361.6 403.0M361.6 390.1L349.7 384.5M301.8 385.9L311.4 385.1M301.8 385.9L301.8 397.5M311.4 385.1L326.0 393.1M311.4 385.1L301.8 397.5M311.4 385.1L317.6 403.9M326.0 393.1L317.6 403.9M326.0 393.1L328.4 405.9M326.0 393.1L330.0 395.4M340.7 392.8L347.3 399.9M340.7 392.8L337.0 407.4M340.7 392.8L349.7 384.5M340.7 392.8L330.0 395.4M347.3 399.9L361.6 403.0M347.3 399.9L337.0 407.4M347.3 399.9L347.3 411.5M347.3 399.9L356.0 408.8M347.3 399.9L349.7 384.5M361.6 403.0L361.7 415.8M361.6 403.0L356.0 408.8M361.6 403.0L349.7 384.5M301.8 397.5L317.6 403.9M301.8 397.5L301.8 409.4M301.8 397.5L313.4 410.2M317.6 403.9L328.4 405.9M317.6 403.9L313.4 410.2M317.6 403.9L325.2 411.2M328.4 405.9L337.0 407.4M328.4 405.9L325.2 411.2M328.4 405.9L340.4 419.6M328.4 405.9L330.0 395.4M337.0 407.4L347.3 411.5M337.0 407.4L340.4 419.6M337.0 407.4L330.0 395.4M347.3 411.5L361.7 415.8M347.3 411.5L340.4 419.6M347.3 411.5L348.9 422.2M347.3 411.5L356.0 408.8M361.7 415.8L348.9 422.2M361.7 415.8L361.8 427.4M361.7 415.8L356.0 408.8M301.8 409.4L313.4 410.2M301.8 409.4L301.8 418.7M313.4 410.2L325.2 411.2M313.4 410.2L301.8 418.7M313.4 410.2L316.4 427.1M313.4 410.2L325.0 423.8M325.2 411.2L340.4 419.6M325.2 411.2L325.0 423.8M340.4 419.6L348.9 422.2M340.4 419.6L325.0 423.8M340.4 419.6L343.7 425.6M340.4 419.6L335.2 431.0M348.9 422.2L361.8 427.4M348.9 422.2L347.2 434.8M348.9 422.2L343.7 425.6M361.8 427.4L347.2 434.8M361.8 427.4L361.9 440.1M301.8 418.7L316.4 427.1M301.8 418.7L301.8 434.6M301.8 418.7L310.9 431.1M316.4 427.1L325.0 423.8M316.4 427.1L310.9 431.1M316.4 427.1L329.6 436.9M325.0 423.8L329.6 436.9M325.0 423.8L335.2 431.0M339.9 434.7L347.2 434.8M339.9 434.7L335.4 442.1M339.9 434.7L349.5 447.7M339.9 434.7L343.7 425.6M339.9 434.7L335.2 431.0M347.2 434.8L361.9 440.1M347.2 434.8L349.5 447.7M347.2 434.8L361.9 447.1M347.2 434.8L343.7 425.6M361.9 440.1L361.9 447.1M301.8 434.6L310.9 431.1M301.8 434.6L301.8 446.5M301.8 434.6L311.7 448.3M310.9 431.1L329.6 436.9M310.9 431.1L311.7 448.3M310.9 431.1L322.6 449.3M310.9 431.1L329.3 445.8M329.6 436.9L335.4 442.1M329.6 436.9L335.2 431.0M329.6 436.9L329.3 445.8M335.4 442.1L349.5 447.7M335.4 442.1L334.3 451.7M335.4 442.1L342.9 452.8M335.4 442.1L335.2 431.0M335.4 442.1L329.3 445.8M349.5 447.7L361.9 447.1M349.5 447.7L348.6 459.0M349.5 447.7L362.0 461.1M349.5 447.7L342.9 452.8M361.9 447.1L362.0 461.1M301.8 446.5L311.7 448.3M301.8 446.5L301.8 451.8M311.7 448.3L322.6 449.3M311.7 448.3L301.8 451.8M311.7 448.3L317.7 462.9M311.7 448.3L308.4 461.6M322.6 449.3L334.3 451.7M322.6 449.3L317.7 462.9M322.6 449.3L327.3 459.2M322.6 449.3L329.3 445.8M334.3 451.7L329.1 461.5M334.3 451.7L337.2 463.7M334.3 451.7L342.9 452.8M334.3 451.7L327.3 459.2M334.3 451.7L329.3 445.8M348.6 459.0L362.0 461.1M348.6 459.0L347.1 465.3M348.6 459.0L362.1 473.3M348.6 459.0L342.9 452.8M362.0 461.1L362.1 473.3M301.8 451.8L301.8 464.2M301.8 451.8L308.4 461.6M317.7 462.9L329.1 461.5M317.7 462.9L311.4 472.7M317.7 462.9L325.8 471.9M317.7 462.9L327.3 459.2M317.7 462.9L308.4 461.6M329.1 461.5L337.2 463.7M329.1 461.5L325.8 471.9M329.1 461.5L339.3 476.6M329.1 461.5L327.3 459.2M337.2 463.7L347.1 465.3M337.2 463.7L339.3 476.6M337.2 463.7L342.9 452.8M347.1 465.3L362.1 473.3M347.1 465.3L339.3 476.6M347.1 465.3L350.3 480.0M347.1 465.3L342.9 452.8M362.1 473.3L350.3 480.0M362.1 473.3L362.2 485.3M301.8 464.2L311.4 472.7M301.8 464.2L301.8 479.9M301.8 464.2L308.4 461.6M311.4 472.7L325.8 471.9M311.4 472.7L301.8 479.9M311.4 472.7L314.2 481.8M311.4 472.7L320.2 482.0M311.4 472.7L308.4 461.6M325.8 471.9L339.3 476.6M325.8 471.9L320.2 482.0M325.8 471.9L334.8 479.0M339.3 476.6L350.3 480.0M339.3 476.6L335.6 486.3M339.3 476.6L334.8 479.0M350.3 480.0L362.2 485.3M350.3 480.0L335.6 486.3M350.3 480.0L347.2 496.2M350.3 480.0L362.3 500.5M362.2 485.3L362.3 500.5M301.8 479.9L314.2 481.8M301.8 479.9L301.8 488.7M314.2 481.8L301.8 488.7M314.2 481.8L317.6 493.3M314.2 481.8L320.2 482.0M328.3 489.7L335.6 486.3M328.3 489.7L317.6 493.3M328.3 489.7L326.1 498.1M328.3 489.7L341.3 499.2M328.3 489.7L320.2 482.0M335.6 486.3L347.2 496.2M335.6 486.3L341.3 499.2M335.6 486.3L320.2 482.0M335.6 486.3L334.8 479.0M347.2 496.2L362.3 500.5M347.2 496.2L341.3 499.2M347.2 496.2L348.8 505.7M347.2 496.2L362.3 505.7M362.3 500.5L362.3 505.7M301.8 488.7L317.6 493.3M301.8 488.7L301.8 500.7M301.8 488.7L315.5 498.1M317.6 493.3L326.1 498.1M317.6 493.3L320.2 482.0M317.6 493.3L315.5 498.1M326.1 498.1L341.3 499.2M326.1 498.1L328.1 513.1M326.1 498.1L340.2 515.8M326.1 498.1L315.5 498.1M341.3 499.2L348.8 505.7M341.3 499.2L340.2 515.8M348.8 505.7L362.3 505.7M348.8 505.7L340.2 515.8M348.8 505.7L353.0 519.5M362.3 505.7L353.0 519.5M362.3 505.7L362.5 522.7M301.8 500.7L313.7 509.1M301.8 500.7L301.8 513.0M301.8 500.7L305.7 513.3M301.8 500.7L315.5 498.1M313.7 509.1L328.1 513.1M313.7 509.1L311.4 519.4M313.7 509.1L323.5 524.2M313.7 509.1L305.7 513.3M313.7 509.1L315.5 498.1M328.1 513.1L340.2 515.8M328.1 513.1L323.5 524.2M328.1 513.1L339.0 524.4M328.1 513.1L315.5 498.1M340.2 515.8L353.0 519.5M340.2 515.8L339.0 524.4M340.2 515.8L353.8 527.5M353.0 519.5L362.5 522.7M353.0 519.5L353.8 527.5M362.5 522.7L353.8 527.5M362.5 522.7L362.5 532.9M301.8 513.0L311.4 519.4M301.8 513.0L301.8 526.4M301.8 513.0L305.7 513.3M311.4 519.4L323.5 524.2M311.4 519.4L301.8 526.4M311.4 519.4L310.8 529.1M311.4 519.4L305.7 513.3M323.5 524.2L339.0 524.4M323.5 524.2L310.8 529.1M323.5 524.2L329.7 534.8M339.0 524.4L353.8 527.5M339.0 524.4L329.7 534.8M339.0 524.4L338.9 537.6M339.0 524.4L352.8 541.8M353.8 527.5L362.5 532.9M353.8 527.5L352.8 541.8M362.5 532.9L352.8 541.8M362.5 532.9L362.6 544.7M301.8 526.4L310.8 529.1M310.8 529.1L329.7 534.8M329.7 534.8L338.9 537.6M338.9 537.6L352.8 541.8M352.8 541.8L362.6 544.7M320.2 482.0L334.8 479.0M340.7 353.0L336.6 354.8M343.7 425.6L335.2 431.0"/><path d="M361.0 306.7L369.0 299.9M361.0 306.7L361.1 316.0M369.0 299.9L380.5 290.0M369.0 299.9L361.1 316.0M369.0 299.9L371.7 309.1M380.5 290.0L392.3 280.0M380.5 290.0L371.7 309.1M380.5 290.0L382.0 299.3M380.5 290.0L390.2 291.8M392.3 280.0L401.9 271.7M392.3 280.0L390.2 291.8M392.3 280.0L400.0 284.6M401.9 271.7L410.8 264.1M401.9 271.7L400.0 284.6M401.9 271.7L409.8 274.6M410.8 264.1L422.3 254.3M410.8 264.1L409.8 274.6M410.8 264.1L422.1 264.4M422.3 254.3L430.3 247.5M422.3 254.3L422.1 264.4M422.3 254.3L430.3 256.3M430.3 247.5L430.3 256.3M361.1 316.0L371.7 309.1M361.1 316.0L361.1 327.7M371.7 309.1L382.0 299.3M371.7 309.1L361.1 327.7M371.7 309.1L370.3 320.1M371.7 309.1L373.3 315.1M382.0 299.3L390.2 291.8M382.0 299.3L382.7 307.1M382.0 299.3L373.3 315.1M390.2 291.8L400.0 284.6M390.2 291.8L382.7 307.1M390.2 291.8L392.1 296.6M400.0 284.6L409.8 274.6M400.0 284.6L392.1 296.6M400.0 284.6L400.0 295.1M400.0 284.6L411.1 283.8M409.8 274.6L422.1 264.4M409.8 274.6L411.1 283.8M422.1 264.4L430.3 256.3M422.1 264.4L411.1 283.8M422.1 264.4L421.5 275.7M422.1 264.4L430.4 267.7M430.3 256.3L430.4 267.7M361.1 327.7L370.3 320.1M361.1 327.7L361.2 334.8M361.1 327.7L369.1 327.4M370.3 320.1L369.1 327.4M370.3 320.1L373.3 315.1M370.3 320.1L376.3 323.1M382.7 307.1L392.1 296.6M382.7 307.1L379.6 319.3M382.7 307.1L394.0 306.7M382.7 307.1L373.3 315.1M392.1 296.6L400.0 295.1M392.1 296.6L394.0 306.7M400.0 295.1L411.1 283.8M400.0 295.1L394.0 306.7M400.0 295.1L400.4 301.4M400.0 295.1L408.6 289.6M411.1 283.8L421.5 275.7M411.1 283.8L408.6 289.6M421.5 275.7L430.4 267.7M421.5 275.7L423.0 282.4M421.5 275.7L408.6 289.6M430.4 267.7L423.0 282.4M430.4 267.7L430.4 275.5M361.2 334.8L369.1 327.4M361.2 334.8L361.3 347.1M361.2 334.8L371.1 337.7M369.1 327.4L371.1 337.7M369.1 327.4L376.3 323.1M379.6 319.3L394.0 306.7M379.6 319.3L378.3 332.7M379.6 319.3L389.7 320.9M379.6 319.3L373.3 315.1M379.6 319.3L376.3 323.1M394.0 306.7L400.4 301.4M394.0 306.7L389.7 320.9M394.0 306.7L398.9 312.7M400.4 301.4L411.1 296.0M400.4 301.4L398.9 312.7M400.4 301.4L408.6 289.6M411.1 296.0L423.0 282.4M411.1 296.0L398.9 312.7M411.1 296.0L412.7 303.7M411.1 296.0L420.4 296.9M411.1 296.0L401.4 313.0M411.1 296.0L408.6 289.6M423.0 282.4L430.4 275.5M423.0 282.4L420.4 296.9M423.0 282.4L430.4 286.5M423.0 282.4L426.8 292.4M423.0 282.4L408.6 289.6M430.4 275.5L430.4 286.5M361.3 347.1L371.1 337.7M361.3 347.1L361.3 353.5M361.3 347.1L371.5 344.0M371.1 337.7L378.3 332.7M371.1 337.7L371.5 344.0M371.1 337.7L376.3 323.1M378.3 332.7L389.7 320.9M378.3 332.7L371.5 344.0M378.3 332.7L379.9 340.1M378.3 332.7L376.3 323.1M389.7 320.9L398.9 312.7M389.7 320.9L379.9 340.1M389.7 320.9L392.6 325.4M398.9 312.7L392.6 325.4M398.9 312.7L401.4 313.0M412.7 303.7L420.4 296.9M412.7 303.7L410.3 310.6M412.7 303.7L421.7 302.3M412.7 303.7L401.4 313.0M420.4 296.9L421.7 302.3M420.4 296.9L426.8 292.4M430.4 286.5L430.4 297.5M430.4 286.5L426.8 292.4M361.3 353.5L371.5 344.0M361.3 353.5L361.4 363.1M361.3 353.5L372.1 353.4M371.5 344.0L379.9 340.1M371.5 344.0L372.1 353.4M379.9 340.1L392.6 325.4M379.9 340.1L372.1 353.4M379.9 340.1L380.6 341.2M392.6 325.4L402.3 322.1M392.6 325.4L391.8 336.7M392.6 325.4L401.4 313.0M392.6 325.4L380.6 341.2M402.3 322.1L410.3 310.6M402.3 322.1L391.8 336.7M402.3 322.1L403.8 327.3M402.3 322.1L409.5 322.3M402.3 322.1L401.4 313.0M410.3 310.6L421.7 302.3M410.3 310.6L409.5 322.3M410.3 310.6L417.9 316.4M410.3 310.6L401.4 313.0M421.7 302.3L430.4 297.5M421.7 302.3L417.9 316.4M421.7 302.3L426.8 292.4M421.7 302.3L425.1 304.6M430.4 297.5L430.5 308.1M430.4 297.5L426.8 292.4M430.4 297.5L425.1 304.6M361.4 363.1L372.1 353.4M361.4 363.1L361.5 374.6M361.4 363.1L369.4 364.6M372.1 353.4L369.4 364.6M372.1 353.4L379.2 350.1M372.1 353.4L380.6 341.2M381.0 347.7L391.8 336.7M381.0 347.7L380.1 359.6M381.0 347.7L391.0 351.5M381.0 347.7L379.2 350.1M381.0 347.7L380.6 341.2M391.8 336.7L403.8 327.3M391.8 336.7L391.0 351.5M391.8 336.7L400.8 336.7M391.8 336.7L380.6 341.2M403.8 327.3L409.5 322.3M403.8 327.3L400.8 336.7M409.5 322.3L417.9 316.4M409.5 322.3L412.5 332.7M409.5 322.3L400.8 336.7M417.9 316.4L430.5 308.1M417.9 316.4L412.5 332.7M417.9 316.4L419.6 323.7M417.9 316.4L426.5 318.4M417.9 316.4L425.1 304.6M430.5 308.1L430.5 315.8M430.5 308.1L426.5 318.4M430.5 308.1L425.1 304.6M361.5 374.6L369.4 364.6M361.5 374.6L361.5 382.8M361.5 374.6L369.1 376.2M369.4 364.6L380.1 359.6M369.4 364.6L369.1 376.2M369.4 364.6L379.2 350.1M380.1 359.6L391.0 351.5M380.1 359.6L369.1 376.2M380.1 359.6L382.1 363.7M380.1 359.6L379.2 350.1M391.0 351.5L401.9 340.6M391.0 351.5L382.1 363.7M391.0 351.5L388.8 358.4M391.0 351.5L399.6 354.4M391.0 351.5L400.8 336.7M401.9 340.6L412.5 332.7M401.9 340.6L399.6 354.4M401.9 340.6L407.8 342.8M401.9 340.6L400.8 336.7M412.5 332.7L419.6 323.7M412.5 332.7L407.8 342.8M412.5 332.7L418.6 335.8M412.5 332.7L400.8 336.7M419.6 323.7L418.6 335.8M419.6 323.7L426.5 318.4M430.5 315.8L430.5 323.0M430.5 315.8L426.5 318.4M361.5 382.8L369.1 376.2M361.5 382.8L361.6 392.1M361.5 382.8L369.3 384.6M369.1 376.2L382.1 363.7M369.1 376.2L369.3 384.6M369.1 376.2L383.1 372.8M369.1 376.2L382.2 363.8M382.1 363.7L388.8 358.4M382.1 363.7L382.2 363.8M388.8 358.4L399.6 354.4M388.8 358.4L383.1 372.8M388.8 358.4L391.9 367.0M388.8 358.4L382.2 363.8M399.6 354.4L407.8 342.8M399.6 354.4L391.9 367.0M399.6 354.4L400.5 362.5M399.6 354.4L408.7 356.4M407.8 342.8L418.6 335.8M407.8 342.8L408.7 356.4M418.6 335.8L430.5 323.0M418.6 335.8L408.7 356.4M418.6 335.8L423.2 343.0M418.6 335.8L430.5 333.0M418.6 335.8L426.5 318.4M418.6 335.8L412.3 355.6M430.5 323.0L430.5 333.0M430.5 323.0L426.5 318.4M361.6 392.1L369.3 384.6M361.6 392.1L361.6 402.9M361.6 392.1L367.2 399.3M369.3 384.6L383.1 372.8M369.3 384.6L372.1 395.0M369.3 384.6L367.2 399.3M383.1 372.8L391.9 367.0M383.1 372.8L372.1 395.0M383.1 372.8L379.5 390.1M383.1 372.8L393.6 373.4M383.1 372.8L382.2 363.8M391.9 367.0L400.5 362.5M391.9 367.0L393.6 373.4M400.5 362.5L408.7 356.4M400.5 362.5L393.6 373.4M400.5 362.5L399.9 367.8M408.7 356.4L399.9 367.8M408.7 356.4L413.0 362.6M408.7 356.4L412.3 355.6M423.2 343.0L430.5 333.0M423.2 343.0L423.7 345.9M423.2 343.0L412.3 355.6M430.5 333.0L430.6 346.7M430.5 333.0L423.7 345.9M361.6 402.9L361.7 412.5M361.6 402.9L367.2 399.3M372.1 395.0L379.5 390.1M372.1 395.0L372.0 405.8M372.1 395.0L367.2 399.3M379.5 390.1L393.6 373.4M379.5 390.1L372.0 405.8M379.5 390.1L382.1 393.9M379.5 390.1L391.3 384.4M379.5 390.1L389.1 388.1M393.6 373.4L399.9 367.8M393.6 373.4L391.3 384.4M399.9 367.8L413.0 362.6M399.9 367.8L391.3 384.4M399.9 367.8L402.5 379.5M413.0 362.6L402.5 379.5M413.0 362.6L410.4 374.1M413.0 362.6L415.5 361.5M413.0 362.6L412.3 355.6M423.8 351.9L430.6 346.7M423.8 351.9L415.5 361.5M423.8 351.9L423.7 345.9M423.8 351.9L423.4 353.9M430.6 346.7L430.6 352.9M430.6 346.7L423.7 345.9M430.6 346.7L423.4 353.9M361.7 412.5L372.0 405.8M361.7 412.5L361.8 418.7M361.7 412.5L369.6 413.4M361.7 412.5L367.2 399.3M372.0 405.8L382.1 393.9M372.0 405.8L369.6 413.4M372.0 405.8L381.1 408.0M372.0 405.8L367.2 399.3M382.1 393.9L381.1 408.0M382.1 393.9L389.9 400.7M382.1 393.9L389.1 388.1M391.3 384.4L402.5 379.5M391.3 384.4L394.4 387.4M391.3 384.4L389.1 388.1M402.5 379.5L410.4 374.1M402.5 379.5L402.3 390.4M402.5 379.5L410.3 378.6M402.5 379.5L394.4 387.4M410.4 374.1L422.4 361.2M410.4 374.1L410.3 378.6M410.4 374.1L422.6 370.2M410.4 374.1L415.5 361.5M422.4 361.2L430.6 352.9M422.4 361.2L422.6 370.2M422.4 361.2L430.6 363.1M422.4 361.2L415.5 361.5M422.4 361.2L423.4 353.9M430.6 352.9L430.6 363.1M430.6 352.9L423.4 353.9M361.8 418.7L369.6 413.4M361.8 418.7L361.8 432.3M369.6 413.4L381.1 408.0M369.6 413.4L361.8 432.3M369.6 413.4L372.8 419.9M381.1 408.0L389.9 400.7M381.1 408.0L372.8 419.9M381.1 408.0L380.1 418.5M381.1 408.0L389.9 409.2M389.9 400.7L402.3 390.4M389.9 400.7L389.9 409.2M389.9 400.7L398.8 402.7M389.9 400.7L394.4 387.4M389.9 400.7L389.1 388.1M402.3 390.4L410.3 378.6M402.3 390.4L398.8 402.7M402.3 390.4L408.6 393.0M402.3 390.4L394.4 387.4M410.3 378.6L422.6 370.2M410.3 378.6L408.6 393.0M410.3 378.6L417.9 385.7M422.6 370.2L430.6 363.1M422.6 370.2L417.9 385.7M422.6 370.2L430.7 377.3M430.6 363.1L430.7 377.3M361.8 432.3L372.8 419.9M361.8 432.3L361.9 437.4M361.8 432.3L369.5 435.3M372.8 419.9L380.1 418.5M372.8 419.9L370.3 434.9M372.8 419.9L369.5 435.3M380.1 418.5L389.9 409.2M380.1 418.5L370.3 434.9M380.1 418.5L382.2 422.6M389.9 409.2L398.8 402.7M389.9 409.2L382.2 422.6M389.9 409.2L392.2 415.5M398.8 402.7L408.6 393.0M398.8 402.7L392.2 415.5M398.8 402.7L403.5 405.4M398.8 402.7L393.7 414.9M408.6 393.0L417.9 385.7M408.6 393.0L403.5 405.4M408.6 393.0L412.0 400.4M417.9 385.7L430.7 377.3M417.9 385.7L412.7 400.2M417.9 385.7L422.4 390.9M417.9 385.7L412.0 400.4M430.7 377.3L422.4 390.9M430.7 377.3L430.7 386.4M361.9 437.4L362.0 450.7M361.9 437.4L369.5 435.3M370.3 434.9L382.2 422.6M370.3 434.9L371.1 439.4M370.3 434.9L369.5 435.3M382.2 422.6L392.2 415.5M382.2 422.6L371.1 439.4M382.2 422.6L384.5 432.9M382.2 422.6L387.0 430.9M392.2 415.5L389.6 429.0M392.2 415.5L393.7 414.9M392.2 415.5L387.0 430.9M403.5 405.4L399.9 419.2M403.5 405.4L393.7 414.9M403.5 405.4L412.0 400.4M412.7 400.2L422.4 390.9M412.7 400.2L413.3 408.3M412.7 400.2L419.6 402.5M412.7 400.2L412.0 400.4M422.4 390.9L430.7 386.4M422.4 390.9L419.6 402.5M422.4 390.9L430.7 392.1M430.7 386.4L430.7 392.1M362.0 450.7L371.1 439.4M362.0 450.7L362.0 457.3M362.0 450.7L370.4 450.4M362.0 450.7L369.5 435.3M371.1 439.4L384.5 432.9M371.1 439.4L370.4 450.4M371.1 439.4L378.9 445.4M371.1 439.4L369.5 435.3M384.5 432.9L378.9 445.4M384.5 432.9L385.4 438.3M384.5 432.9L383.8 439.5M384.5 432.9L387.0 430.9M389.6 429.0L399.9 419.2M389.6 429.0L389.7 438.6M389.6 429.0L393.7 414.9M389.6 429.0L385.4 438.3M389.6 429.0L387.0 430.9M399.9 419.2L413.3 408.3M399.9 419.2L389.7 438.6M399.9 419.2L403.9 424.4M399.9 419.2L393.7 414.9M399.9 419.2L412.0 400.4M413.3 408.3L419.6 402.5M413.3 408.3L403.9 424.4M413.3 408.3L411.6 419.8M413.3 408.3L418.3 412.2M413.3 408.3L412.0 400.4M419.6 402.5L430.7 392.1M419.6 402.5L418.3 412.2M419.6 402.5L422.2 403.3M430.7 392.1L430.8 407.0M430.7 392.1L422.2 403.3M362.0 457.3L370.4 450.4M362.0 457.3L362.1 468.4M370.4 450.4L378.9 445.4M370.4 450.4L362.1 468.4M370.4 450.4L373.8 456.6M378.9 445.4L389.7 438.6M378.9 445.4L373.8 456.6M378.9 445.4L382.3 454.9M378.9 445.4L383.8 439.5M389.7 438.6L403.9 424.4M389.7 438.6L382.3 454.9M389.7 438.6L393.8 440.5M389.7 438.6L385.4 438.3M389.7 438.6L383.8 439.5M403.9 424.4L411.6 419.8M403.9 424.4L393.8 440.5M403.9 424.4L401.5 436.7M403.9 424.4L411.1 427.9M411.6 419.8L418.3 412.2M411.6 419.8L412.8 426.0M411.6 419.8L411.1 427.9M418.3 412.2L430.8 407.0M418.3 412.2L412.8 426.0M418.3 412.2L419.5 425.3M418.3 412.2L422.2 403.3M430.8 407.0L419.5 425.3M430.8 407.0L430.8 414.2M430.8 407.0L422.2 403.3M362.1 468.4L373.8 456.6M362.1 468.4L362.2 477.8M362.1 468.4L374.9 467.0M373.8 456.6L382.3 454.9M373.8 456.6L374.9 467.0M382.3 454.9L393.8 440.5M382.3 454.9L374.9 467.0M382.3 454.9L378.9 464.3M382.3 454.9L389.4 454.1M393.8 440.5L401.5 436.7M393.8 440.5L389.4 454.1M401.5 436.7L389.4 454.1M401.5 436.7L401.8 449.8M401.5 436.7L411.7 440.2M401.5 436.7L411.1 427.9M412.8 426.0L419.5 425.3M412.8 426.0L411.1 427.9M419.5 425.3L430.8 414.2M419.5 425.3L411.7 440.2M419.5 425.3L419.9 433.3M419.5 425.3L430.8 425.8M419.5 425.3L411.1 427.9M430.8 414.2L430.8 425.8M362.2 477.8L374.9 467.0M362.2 477.8L362.2 488.1M362.2 477.8L373.9 478.8M374.9 467.0L378.9 464.3M374.9 467.0L373.9 478.8M378.9 464.3L389.4 454.1M378.9 464.3L373.9 478.8M378.9 464.3L379.9 474.3M378.9 464.3L388.8 463.6M389.4 454.1L401.8 449.8M389.4 454.1L391.6 462.6M389.4 454.1L388.8 463.6M401.8 449.8L411.7 440.2M401.8 449.8L391.6 462.6M401.8 449.8L402.2 458.4M401.8 449.8L408.7 448.0M411.7 440.2L419.9 433.3M411.7 440.2L422.5 440.0M411.7 440.2L411.1 427.9M411.7 440.2L408.7 448.0M419.9 433.3L430.8 425.8M419.9 433.3L422.5 440.0M430.8 425.8L422.5 440.0M430.8 425.8L430.8 432.6M362.2 488.1L373.9 478.8M362.2 488.1L362.3 496.3M373.9 478.8L379.9 474.3M373.9 478.8L362.3 496.3M373.9 478.8L372.3 490.4M373.9 478.8L382.2 479.2M379.9 474.3L382.2 479.2M379.9 474.3L388.8 463.6M391.6 462.6L402.2 458.4M391.6 462.6L382.2 479.2M391.6 462.6L393.7 475.4M391.6 462.6L399.0 467.1M391.6 462.6L388.8 463.6M402.2 458.4L408.9 451.4M402.2 458.4L399.0 467.1M402.2 458.4L407.2 459.9M402.2 458.4L408.7 448.0M408.9 451.4L422.5 440.0M408.9 451.4L423.6 446.6M408.9 451.4L407.2 459.9M408.9 451.4L408.7 448.0M422.5 440.0L430.8 432.6M422.5 440.0L423.6 446.6M422.5 440.0L408.7 448.0M430.8 432.6L423.6 446.6M430.8 432.6L430.9 442.8M362.3 496.3L372.3 490.4M362.3 496.3L362.3 504.7M372.3 490.4L382.2 479.2M372.3 490.4L362.3 504.7M372.3 490.4L372.0 501.8M372.3 490.4L379.2 491.6M382.2 479.2L393.7 475.4M382.2 479.2L379.2 491.6M382.2 479.2L388.8 463.6M393.7 475.4L399.0 467.1M393.7 475.4L379.2 491.6M393.7 475.4L391.6 484.2M393.7 475.4L403.0 474.8M399.0 467.1L409.2 462.9M399.0 467.1L403.0 474.8M399.0 467.1L407.2 459.9M409.2 462.9L423.6 446.6M409.2 462.9L403.0 474.8M409.2 462.9L409.1 469.7M409.2 462.9L424.1 460.5M409.2 462.9L407.2 459.9M423.6 446.6L430.9 442.8M423.6 446.6L424.1 460.5M423.6 446.6L430.9 451.3M423.6 446.6L407.2 459.9M430.9 442.8L430.9 451.3M362.3 504.7L372.0 501.8M362.3 504.7L362.4 518.0M372.0 501.8L379.2 491.6M372.0 501.8L362.4 518.0M372.0 501.8L371.0 511.3M372.0 501.8L378.9 505.7M379.2 491.6L391.6 484.2M379.2 491.6L378.9 505.7M379.2 491.6L389.7 494.9M391.6 484.2L403.0 474.8M391.6 484.2L389.7 494.9M391.6 484.2L402.6 485.4M403.0 474.8L409.1 469.7M403.0 474.8L402.6 485.4M403.0 474.8L409.2 477.9M409.1 469.7L424.1 460.5M409.1 469.7L409.2 477.9M409.1 469.7L419.8 469.3M409.1 469.7L414.1 475.5M424.1 460.5L430.9 451.3M424.1 460.5L419.8 469.3M424.1 460.5L430.9 461.8M430.9 451.3L430.9 461.8M362.4 518.0L371.0 511.3M362.4 518.0L362.5 523.4M371.0 511.3L378.9 505.7M371.0 511.3L362.5 523.4M371.0 511.3L372.0 517.5M378.9 505.7L389.7 494.9M378.9 505.7L372.0 517.5M378.9 505.7L382.6 509.0M389.7 494.9L402.6 485.4M389.7 494.9L382.6 509.0M389.7 494.9L388.9 504.4M389.7 494.9L393.8 502.9M402.6 485.4L409.2 477.9M402.6 485.4L403.2 493.0M402.6 485.4L393.8 502.9M409.2 477.9L403.2 493.0M409.2 477.9L410.8 490.3M409.2 477.9L414.1 475.5M419.8 469.3L430.9 461.8M419.8 469.3L420.6 483.7M419.8 469.3L414.1 475.5M430.9 461.8L420.6 483.7M430.9 461.8L431.0 476.0M362.5 523.4L372.0 517.5M362.5 523.4L362.5 534.0M372.0 517.5L382.6 509.0M372.0 517.5L362.5 534.0M372.0 517.5L373.8 525.1M382.6 509.0L388.9 504.4M382.6 509.0L373.8 525.1M382.6 509.0L379.8 521.7M388.9 504.4L379.8 521.7M388.9 504.4L392.5 515.1M388.9 504.4L393.8 502.9M403.2 493.0L410.8 490.3M403.2 493.0L399.4 508.5M403.2 493.0L411.3 495.9M403.2 493.0L393.8 502.9M410.8 490.3L420.6 483.7M410.8 490.3L411.3 495.9M410.8 490.3L414.1 475.5M420.6 483.7L431.0 476.0M420.6 483.7L411.3 495.9M420.6 483.7L424.2 489.6M420.6 483.7L431.0 480.8M420.6 483.7L414.1 475.5M431.0 476.0L431.0 480.8M362.5 534.0L373.8 525.1M362.5 534.0L362.6 544.7M373.8 525.1L379.8 521.7M373.8 525.1L362.6 544.7M373.8 525.1L374.9 535.4M379.8 521.7L392.5 515.1M379.8 521.7L374.9 535.4M379.8 521.7L379.7 531.8M379.8 521.7L389.4 524.5M392.5 515.1L399.4 508.5M392.5 515.1L389.4 524.5M392.5 515.1L400.6 516.0M392.5 515.1L393.8 502.9M399.4 508.5L411.3 495.9M399.4 508.5L400.6 516.0M399.4 508.5L393.8 502.9M411.3 495.9L424.2 489.6M411.3 495.9L400.6 516.0M411.3 495.9L414.2 505.7M411.3 495.9L418.3 502.6M424.2 489.6L431.0 480.8M424.2 489.6L418.3 502.6M424.2 489.6L431.0 493.0M431.0 480.8L431.0 493.0M362.6 544.7L374.9 535.4M374.9 535.4L379.7 531.8M379.7 531.8L389.4 524.5M389.4 524.5L400.6 516.0M400.6 516.0L414.2 505.7M414.2 505.7L418.3 502.6M418.3 502.6L431.0 493.0M415.5 361.5L423.7 345.9M415.5 361.5L423.4 353.9M415.5 361.5L412.3 355.6M423.7 345.9L412.3 355.6M394.4 387.4L389.1 388.1M373.3 315.1L376.3 323.1M379.2 350.1L380.6 341.2M385.4 438.3L383.8 439.5M385.4 438.3L387.0 430.9"/>
</g>
<g font-family="Liberation Sans, sans-serif" font-weight="bold" font-size="19" fill="#c6dff4"><text x="329.2" y="162">Step</text><text x="386.3" y="162">-1</text></g>
<g stroke="#c2527c" stroke-width="1.3" fill="none"><path d="M620 654.5V635.5M620 654.5L638.8 660M620 654.5L610 663.8"/></g>
<g font-family="Liberation Sans, sans-serif" font-size="10.5" fill="#7a1f45"><text x="619.5" y="625">Z</text><text x="650" y="664">Y</text><text x="601.5" y="669.5">X</text></g>
</svg>
<div style="position:absolute;left:728px;top:85px;width:552px;height:606px;background:#f0f0f0"></div><div style="position:absolute;left:728px;top:85px;width:4px;height:606px;background:#f4f4f4"></div><div style="position:absolute;left:732px;top:85px;width:1px;height:606px;background:#8c8c8c"></div><div style="position:absolute;left:733px;top:85px;width:2px;height:606px;background:#fff"></div><div style="position:absolute;left:728px;top:84px;width:552px;height:4px;background:#fafafa"></div><div style="position:absolute;left:735px;top:88px;width:545px;height:1px;background:#9c9c9c"></div><div style="position:absolute;left:735px;top:89px;width:545px;height:2px;background:#fdfdfd"></div><div style="position:absolute;left:735px;top:91px;width:545px;height:1px;background:#c8c8c8"></div><div style="position:absolute;left:735px;top:92px;width:545px;height:1px;background:#f0f0f0"></div><div style="position:absolute;left:735px;top:93px;width:545px;height:1px;background:#6a6a6a"></div><div style="position:absolute;left:735px;top:94px;width:530px;height:19px;background:#efefef;border-left:1px solid #6a6a6a"></div><div style="position:absolute;left:735px;top:113px;width:530px;height:1px;background:#6f6f6f"></div><div style="position:absolute;left:908px;top:94px;width:1.5px;height:20px;background:#6a6a6a"></div><div style="position:absolute;left:1100px;top:94px;width:1.5px;height:20px;background:#6a6a6a"></div><div style="position:absolute;left:736px;top:114px;width:529px;height:24px;background:#fff"></div><div style="position:absolute;left:735px;top:114px;width:1px;height:577px;background:#777"></div><div style="position:absolute;left:736px;top:130px;width:529px;height:6px;background:linear-gradient(#fff,#d4e8f6)"></div><svg class="abs" style="left:737px;top:116px" width="18" height="18" viewBox="0 0 18 18"><rect x="2.5" y="1.5" width="13" height="12" fill="#fff" stroke="#000" stroke-width="1.1"/><rect x="2.5" y="1.5" width="13" height="3" fill="#141450"/><path d="M8 8h6M9 10.5h5" stroke="#777" stroke-width=".9"/><rect x="1.5" y="8" width="4" height="5" fill="#fff" stroke="#000" stroke-width="1.1"/><rect x="5" y="11" width="4" height="5" fill="#fff" stroke="#000" stroke-width="1.1"/></svg><span class="t" style="left:755.20px;top:115.50px;font-size:12px;line-height:16px;color:#000;transform:scaleX(0.8920);">DEFORM SIMULATION</span><div style="position:absolute;left:745.5px;top:133.6px;width:2px;height:1.6px;background:#222"></div><div style="position:absolute;left:764px;top:133.6px;width:2px;height:1.6px;background:#222"></div><div style="position:absolute;left:1264px;top:94px;width:16px;height:626px;background:linear-gradient(90deg,#dcdcde,#dcdcde 4px,#aab2bb 5px,#c4c8cd 9px,#dedee0 14px)"></div><div style="position:absolute;left:1264px;top:94px;width:16px;height:18px;background:#f0f0f0;border-bottom:1px solid #6e6e6e"></div><div style="position:absolute;left:1264px;top:112px;width:16px;height:29px;background:#e9e9e9;border-bottom:1px solid #8a8a8a"></div><svg class="abs" style="left:1266px;top:98px" width="12" height="10" viewBox="0 0 12 10"><path d="M1.8 7.4L5.6 3L9.4 7.4z" fill="#000"/></svg><div style="position:absolute;left:1269px;top:168px;width:11px;height:19px;background:linear-gradient(90deg,#c9ccd0,#e6e6e6);border-bottom:1px solid #6e6e6e"></div><svg class="abs" style="left:1267px;top:175px" width="10" height="8" viewBox="0 0 10 8"><path d="M1.2 2L8.2 2L4.7 6.4z" fill="#000"/></svg><svg class="abs" style="left:1268px;top:193px" width="12" height="16" viewBox="0 0 12 16"><rect x="2" y="2.5" width="5" height="5.5" fill="#e4ecd0" stroke="#7cb04c" stroke-width="1"/><circle cx="1.5" cy="11" r="2.6" fill="#2c7c54"/><circle cx="8" cy="11" r="3" fill="#1c6480"/><circle cx="7.3" cy="10.2" r="1.2" fill="#5c9cb4"/></svg><div style="position:absolute;left:1269px;top:218px;width:11px;height:1px;background:#6e6e6e"></div><div style="position:absolute;left:1269px;top:220px;width:10px;height:10.5px;background:#e8e8e8;border:1px solid;border-color:#fff #777 #777 #fff"></div><div style="position:absolute;left:1269px;top:230.5px;width:10px;height:10.5px;background:#e8e8e8;border:1px solid;border-color:#fff #777 #777 #fff"></div><svg class="abs" style="left:1268px;top:221px" width="10" height="20" viewBox="0 0 10 20"><path d="M1 7L4.3 2.8L7.6 7zM1 12L7.6 12L4.3 16.2z" fill="#000"/></svg><div style="position:absolute;left:1269px;top:284px;width:11px;height:1px;background:#8a8a8a"></div><div style="position:absolute;left:1269px;top:323px;width:6px;height:1px;background:#7a7a7a"></div><div style="position:absolute;left:1274px;top:323px;width:1px;height:124px;background:#8a8a8a"></div><div style="position:absolute;left:1269px;top:489px;width:6.5px;height:25px;background:#e4e4e4;border-right:1.5px solid #5a5a5a;border-bottom:1.5px solid #5a5a5a"></div><div style="position:absolute;left:1269px;top:498px;width:2px;height:5px;background:#222"></div><div style="position:absolute;left:1269px;top:546px;width:9px;height:1px;background:#9a9a9a"></div><div style="position:absolute;left:1269px;top:677px;width:11px;height:1.5px;background:#6a6a6a"></div><div style="position:absolute;left:1269px;top:679px;width:11px;height:12px;background:#e6e6e8"></div>
<div style="position:absolute;left:4px;top:691px;width:1276px;height:29px;background:#f0f0f0"></div>
<div style="position:absolute;left:481px;top:695px;width:17px;height:25px;background:#e6eaf4;border-left:1px solid #8a8a8a;border-top:1px solid #8a8a8a"></div>
<svg class="abs" style="left:482px;top:699px" width="16" height="16" viewBox="0 0 16 16"><circle cx="8" cy="8" r="7.2" fill="#3d6fd0"/><circle cx="8" cy="8" r="6.3" fill="#4f7fdc"/></svg>
<span class="t" style="left:488.30px;top:699.30px;font-size:12px;line-height:16px;color:#fff;font-weight:bold;transform:scaleX(1.0417);font-style:italic;font-family:"Liberation Serif",serif;">i</span>
<div style="position:absolute;left:501px;top:695px;width:779px;height:25px;border-left:1px solid #9a9a9a;border-top:1px solid #9a9a9a;background:#efefef"></div>
<div class="abs" style="left:701px;top:135px;width:568px;height:577px;background:#f0f0f0;border:1px solid #6a8da8;box-shadow:0 3px 9px 0 rgba(0,0,20,.5), inset 0 0 0 2px #dcedf8, inset 0 0 3px 2px #e4f0f8"></div>
<div style="position:absolute;left:702px;top:136px;width:566px;height:30px;background:#fff"></div>
<svg class="abs" style="left:710px;top:141px" width="18" height="18" viewBox="0 0 18 18"><g stroke="#1a1a1a" stroke-width="1.3" fill="#d8d8d8"><rect x="1.5" y="2.5" width="7" height="8" rx="1.5"/><rect x="8" y="7.5" width="6.5" height="8.5" rx="1.5" fill="#c8c8c8"/></g><path d="M6.8 4.2C8.6 .6 12.2 1 14.6 6.2M8.4 1l-1.8 3.4l3.2 .4M15.4 3.4l-.7 3l-2.8-1.2" stroke="#c2184a" stroke-width="1.25" fill="none"/></svg>
<span class="t" style="left:731.30px;top:143.00px;font-size:12px;line-height:16px;color:#000;">Inter-Object Data Definition</span>
<span class="t" style="left:1196.80px;top:142.80px;font-size:12.5px;line-height:16px;color:#000;transform:scaleX(0.7495);">?</span>
<svg class="abs" style="left:1238px;top:143px" width="14" height="14" viewBox="1238 143 14 14"><path d="M1239.8 144.8L1250.2 155.2M1250.2 144.8L1239.8 155.2" stroke="#111" stroke-width="1.2"/></svg>
<div style="position:absolute;left:713px;top:199px;width:458px;height:499px;border:1px solid;border-color:#fff #6a6a6a #6a6a6a #fff;box-shadow:inset -1px -1px 0 #a8a8a8"></div>
<div style="position:absolute;left:795px;top:181px;width:55px;height:19px;border-top:1px solid #fafafa;border-left:1px solid #fafafa;border-right:1px solid #6a6a6a;box-shadow:inset -1px 0 0 #a8a8a8;border-radius:2px 2px 0 0"></div>
<span class="t" style="left:800.80px;top:180.40px;font-size:12px;line-height:16px;color:#8e8e8e;transform:scaleX(0.8288);">Thermal</span>
<div style="position:absolute;left:852px;top:181px;width:56px;height:19px;border-top:1px solid #fafafa;border-left:1px solid #fafafa;border-right:1px solid #6a6a6a;box-shadow:inset -1px 0 0 #a8a8a8;border-radius:2px 2px 0 0"></div>
<span class="t" style="left:859.50px;top:180.40px;font-size:12px;line-height:16px;color:#8e8e8e;transform:scaleX(0.8587);">Heating</span>
<div style="position:absolute;left:910px;top:181px;width:95.5px;height:19px;border-top:1px solid #fafafa;border-left:1px solid #fafafa;border-right:1px solid #6a6a6a;box-shadow:inset -1px 0 0 #a8a8a8;border-radius:2px 2px 0 0"></div>
<span class="t" style="left:917.50px;top:180.40px;font-size:12px;line-height:16px;color:#000;transform:scaleX(0.8749);">Friction Window</span>
<div style="position:absolute;left:1007.5px;top:181px;width:68.5px;height:19px;border-top:1px solid #fafafa;border-left:1px solid #fafafa;border-right:1px solid #6a6a6a;box-shadow:inset -1px 0 0 #a8a8a8;border-radius:2px 2px 0 0"></div>
<span class="t" style="left:1014.50px;top:180.40px;font-size:12px;line-height:16px;color:#000;transform:scaleX(0.9160);">Tool Wear</span>
<div style="position:absolute;left:1078px;top:181px;width:83px;height:19px;border-top:1px solid #fafafa;border-left:1px solid #fafafa;border-right:1px solid #6a6a6a;box-shadow:inset -1px 0 0 #a8a8a8;border-radius:2px 2px 0 0"></div>
<span class="t" style="left:1085.00px;top:180.40px;font-size:12px;line-height:16px;color:#8e8e8e;transform:scaleX(0.8743);">Rigid Contact</span>
<div style="position:absolute;left:713px;top:178px;width:81px;height:23px;background:#f0f0f0;border-top:1px solid #fff;border-left:1px solid #fff;border-right:1px solid #585858;box-shadow:inset -1px 0 0 #a0a0a0;border-radius:2px 2px 0 0"></div>
<span class="t" style="left:722.50px;top:179.90px;font-size:12px;line-height:16px;color:#000;transform:scaleX(0.8494);">Deformation</span>
<div class="btn" style="left:1177px;top:177px;width:80.5px;height:23.5px"></div>
<span class="t" style="left:1203.50px;top:180.40px;font-size:12px;line-height:16px;color:#000;transform:scaleX(0.8480);">Close</span>
<div class="grp" style="left:726px;top:219px;width:430px;height:46.5px"></div><div class="lbl" style="left:732px;top:217px;width:80px;height:5px"></div><span class="t" style="left:735.00px;top:211.00px;font-size:12px;line-height:16px;color:#8e8e8e;transform:scaleX(0.8735);">Contact method</span>
<div class="radio dis" style="left:737.0px;top:236.5px"></div><div class="dot" style="left:741.0px;top:240.5px;background:#7a7a7a"></div>
<span class="t" style="left:755.50px;top:234.60px;font-size:12px;line-height:16px;color:#8e8e8e;transform:scaleX(0.8371);">Penalty</span>
<div class="radio dis" style="left:871.5px;top:236.5px"></div>
<span class="t" style="left:889.50px;top:234.60px;font-size:12px;line-height:16px;color:#8e8e8e;transform:scaleX(0.8679);">Conforming coupling</span>
<div class="btn" style="left:998px;top:232.5px;width:80px;height:23px"></div>
<span class="t" style="left:1009.00px;top:235.30px;font-size:12px;line-height:16px;color:#8e8e8e;transform:scaleX(0.9154);">Advanced...</span>
<div class="grp" style="left:729px;top:283px;width:424px;height:67px"></div><div class="lbl" style="left:735.3px;top:281px;width:55.700000000000045px;height:5px"></div><span class="t" style="left:738.30px;top:274.80px;font-size:12px;line-height:16px;color:#000;transform:scaleX(0.8566);">Separation</span>
<div class="radio" style="left:739.5px;top:301.5px"></div><div class="dot" style="left:743.5px;top:305.5px;"></div>
<span class="t" style="left:758.30px;top:299.60px;font-size:12px;line-height:16px;color:#000;transform:scaleX(0.8534);">Separable</span>
<div class="radio" style="left:739.5px;top:329.8px"></div>
<span class="t" style="left:758.30px;top:327.90px;font-size:12px;line-height:16px;color:#000;transform:scaleX(0.8637);">Non-Separable</span>
<span class="t" style="left:893.80px;top:298.80px;font-size:12px;line-height:16px;color:#000;transform:scaleX(0.8062);">Criteria</span>
<div class="sunk" style="left:931px;top:297.8px;width:114.5px;height:17.4px;background:#fff"></div>
<span class="t" style="left:937.00px;top:298.80px;font-size:12px;line-height:16px;color:#000;transform:scaleX(0.8604);">System Default</span>
<div class="btn" style="left:1029.5px;top:299.5px;width:14.5px;height:14px"></div>
<svg class="abs" style="left:1032px;top:303.6px" width="10" height="6" viewBox="0 0 10 6"><path d="M1 .8H9L5 5z" fill="#000"/></svg>
<div class="sunk" style="left:1053.5px;top:297.5px;width:87.5px;height:18.5px"></div>
<span class="t" style="left:1057.60px;top:298.80px;font-size:12px;line-height:16px;color:#8e8e8e;transform:scaleX(0.7508);">0</span>
<div class="grp" style="left:726px;top:368px;width:430px;height:315.5px"></div><div class="lbl" style="left:732.5px;top:366px;width:38.5px;height:5px"></div><span class="t" style="left:735.50px;top:360.00px;font-size:12px;line-height:16px;color:#000;transform:scaleX(0.8257);">Friction</span>
<div class="grp" style="left:737.5px;top:388px;width:408.0px;height:41.5px"></div><div class="lbl" style="left:744px;top:386px;width:27.799999999999955px;height:5px"></div><span class="t" style="left:747.00px;top:380.00px;font-size:12px;line-height:16px;color:#000;transform:scaleX(0.8372);">Type</span>
<div class="radio" style="left:747.3px;top:404.0px"></div><div class="dot" style="left:751.3px;top:408.0px;"></div>
<span class="t" style="left:766.30px;top:402.20px;font-size:12px;line-height:16px;color:#000;transform:scaleX(0.8583);">Shear</span>
<div class="radio" style="left:878.3px;top:404.0px"></div>
<span class="t" style="left:896.80px;top:402.20px;font-size:12px;line-height:16px;color:#000;transform:scaleX(0.8375);">Coulomb</span>
<div class="radio" style="left:1010.3px;top:404.0px"></div>
<span class="t" style="left:1029.50px;top:402.20px;font-size:12px;line-height:16px;color:#000;transform:scaleX(0.8218);">Hybrid</span>
<div class="grp" style="left:737.5px;top:444.5px;width:408.0px;height:233.0px"></div><div class="lbl" style="left:743.3px;top:442.5px;width:32.200000000000045px;height:5px"></div><span class="t" style="left:746.30px;top:436.30px;font-size:12px;line-height:16px;color:#000;transform:scaleX(0.8786);">Value</span>
<div class="radio" style="left:758.5px;top:473.5px"></div><div class="dot" style="left:762.5px;top:477.5px;"></div>
<span class="t" style="left:776.80px;top:472.20px;font-size:12px;line-height:16px;color:#000;transform:scaleX(0.8573);">Constant</span>
<div class="sunk" style="left:865px;top:471px;width:188px;height:17.5px;background:#fff"></div>
<span class="t" style="left:869.60px;top:472.20px;font-size:12px;line-height:16px;color:#000;transform:scaleX(0.8740);">0.12</span>
<div class="btn" style="left:1060px;top:467.5px;width:24.5px;height:24px"></div>
<svg class="abs" style="left:1068px;top:477px" width="10" height="6" viewBox="0 0 10 6"><path d="M1.2 .8H9.2L5.2 5z" fill="#000"/></svg>
<div class="radio" style="left:758.5px;top:503.5px"></div>
<span class="t" style="left:777.50px;top:502.20px;font-size:12px;line-height:16px;color:#000;transform:scaleX(0.8583);">Function</span>
<div class="sunk" style="left:865px;top:501.5px;width:187.5px;height:17.5px"></div>
<span class="t" style="left:870.00px;top:502.60px;font-size:12px;line-height:16px;color:#8e8e8e;transform:scaleX(0.8786);">f(Time)</span>
<div class="btn" style="left:1035.5px;top:503px;width:15.5px;height:14.5px"></div>
<svg class="abs" style="left:1038.5px;top:507.5px" width="10" height="6" viewBox="0 0 10 6"><path d="M1 .8H9L5 5z" fill="#9a9a9a"/></svg>
<div class="btn" style="left:1060px;top:498.5px;width:24.5px;height:25px"></div>
<svg class="abs" style="left:1063px;top:501px" width="20" height="20" viewBox="0 0 20 20"><rect x="3.5" y="9.5" width="8" height="8" fill="none" stroke="#555" stroke-width="1" stroke-dasharray="1.5 1.2"/><path d="M6.5 15.5L8 11L13 3.5L15.5 5L10.5 12.5z" fill="#6e6e6e" stroke="#2a2a2a" stroke-width=".9"/><path d="M13.3 3.2L14.6 2.2L16.3 3.4L15.6 4.8z" fill="#222"/></svg>
<div class="sunk" style="left:759.5px;top:533px;width:12.5px;height:12.5px;background:#fff"></div>
<span class="t" style="left:778.60px;top:530.80px;font-size:12px;line-height:16px;color:#000;transform:scaleX(0.8619);">User Rtn.</span>
<div class="sunk" style="left:856.5px;top:530.5px;width:195.5px;height:18.5px"></div>
<span class="t" style="left:860.80px;top:531.30px;font-size:12px;line-height:16px;color:#858585;transform:scaleX(0.5706);">1</span>
<div class="btn" style="left:1040px;top:532px;width:11px;height:8px"></div>
<div class="btn" style="left:1040px;top:540px;width:11px;height:8px"></div>
<svg class="abs" style="left:1040px;top:532px" width="11" height="16" viewBox="0 0 11 16"><path d="M2.5 5.5L5.2 2.5L8 5.5zM2.5 10.5L5.2 13.5L8 10.5z" fill="#8a8a8a"/></svg>
<svg class="abs" style="left:1254px;top:697px" width="14" height="14" viewBox="0 0 14 14" stroke-width="1"><path d="M1 14L14 1M5 14L14 5M9 14L14 9" stroke="#9a9a9a"/><path d="M2 14L14 2M6 14L14 6M10 14L14 10" stroke="#fff"/></svg>
<svg class="abs" style="left:1270px;top:710px" width="10" height="10" viewBox="0 0 10 10"><path d="M0 10L10 0M4 10L10 4" stroke="#8a8a8a"/><path d="M1 10L10 1M5 10L10 5" stroke="#fff"/></svg>
<svg class="abs" style="left:1196px;top:242px" width="36" height="40" viewBox="1196 242 36 40"><defs><radialGradient id="cg" cx="1211.1" cy="256.8" r="9" gradientUnits="userSpaceOnUse"><stop offset="0" stop-color="#fff0f0"/><stop offset="0.3" stop-color="#fbd9dc"/><stop offset="0.5" stop-color="#d4506a"/><stop offset="0.66" stop-color="#c4304e"/><stop offset="0.8" stop-color="#e08898" stop-opacity=".75"/><stop offset="1" stop-color="#f0c0c8" stop-opacity="0"/></radialGradient></defs><circle cx="1211.1" cy="256.8" r="9" fill="url(#cg)"/><polygon points="1212.3,257.4 1212.3,273.5 1216.1,270.0 1219.0,276.4 1221.5,275.3 1218.6,269.0 1223.8,269.0" fill="#fff" stroke="#111" stroke-width="1.15" stroke-linejoin="round"/></svg>
</body></html>
